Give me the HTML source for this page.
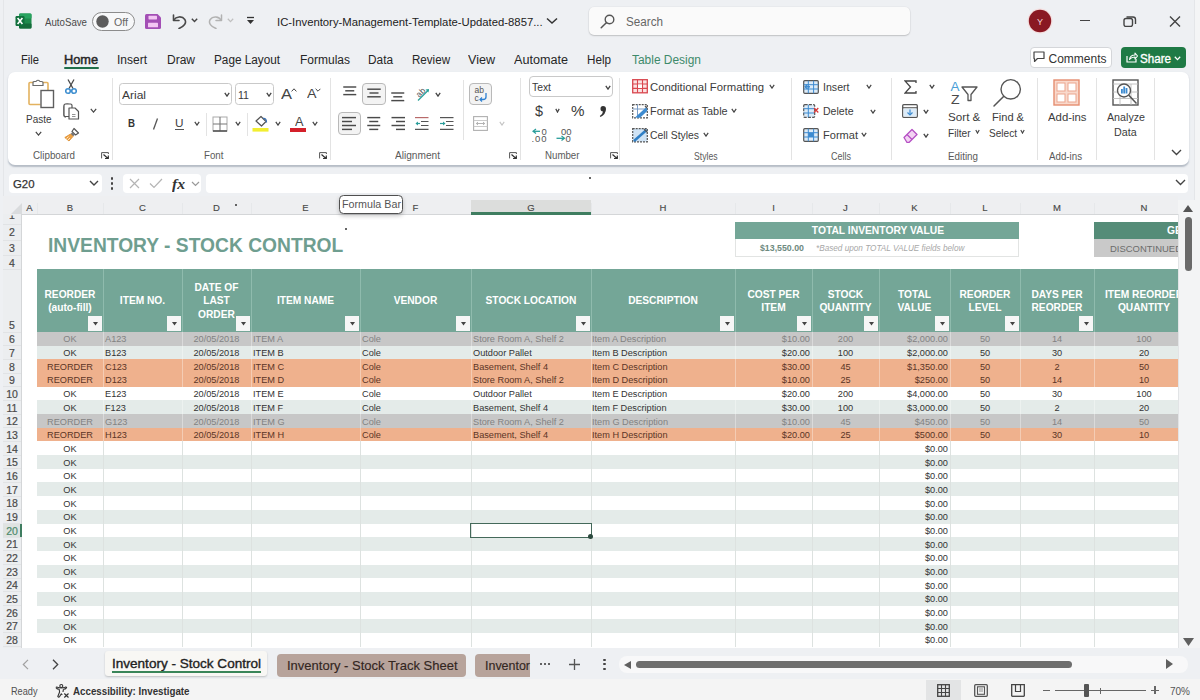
<!DOCTYPE html>
<html><head><meta charset="utf-8"><style>
html,body{margin:0;padding:0;}
body{width:1200px;height:700px;overflow:hidden;position:relative;background:#eef0f3;font-family:"Liberation Sans",sans-serif;}
body>div,body>svg{position:absolute;box-sizing:border-box;}
</style></head><body>
<div style="left:8px;top:72px;width:1181px;height:93px;background:#ffffff;border-radius:7px;box-shadow:0 1.2px 1.5px rgba(90,105,125,0.38);"></div>
<div style="left:9px;top:174px;width:93px;height:19px;background:#ffffff;border-radius:4px;"></div>
<div style="left:123px;top:174px;width:78px;height:19px;background:#ffffff;border-radius:4px;"></div>
<div style="left:206px;top:174px;width:982px;height:19px;background:#ffffff;border-radius:4px;"></div>
<div style="left:22px;top:214px;width:1156px;height:434px;background:#ffffff;"></div>
<div style="left:3px;top:0px;width:1px;height:700px;background:#e4e6e9;"></div>
<div style="left:1194px;top:0px;width:1px;height:700px;background:#e4e6e9;"></div>
<div style="left:1195px;top:0px;width:5px;height:700px;background:#f4f5f6;"></div>
<div style="left:45.00px;top:11.30px;height:22px;line-height:22px;font-size:11px;color:#4a4a4a;white-space:nowrap;transform:scaleX(0.8805);transform-origin:left center;">AutoSave</div>
<div style="left:277.00px;top:11.00px;height:22.6px;line-height:22.6px;font-size:11.3px;color:#222;white-space:nowrap;">IC-Inventory-Management-Template-Updated-8857...</div>
<div style="left:589px;top:7px;width:320.5px;height:28.4px;background:#fafafa;border-radius:5px;box-shadow:0 1px 1.5px rgba(0,0,0,0.18),0 0 0 0.6px #e4e6e9;"></div>
<div style="left:626.00px;top:9.80px;height:24px;line-height:24px;font-size:12px;color:#666;white-space:nowrap;transform:scaleX(0.9731);transform-origin:left center;">Search</div>
<div style="left:21.00px;top:47.80px;height:24px;line-height:24px;font-size:12px;color:#262626;white-space:nowrap;transform:scaleX(0.9309);transform-origin:left center;">File</div>
<div style="left:64.00px;top:47.80px;height:24px;line-height:24px;font-size:12px;color:#262626;white-space:nowrap;transform:scaleX(1.0621);transform-origin:left center;-webkit-text-stroke:0.45px #262626;">Home</div>
<div style="left:117.00px;top:47.80px;height:24px;line-height:24px;font-size:12px;color:#262626;white-space:nowrap;">Insert</div>
<div style="left:167.00px;top:47.80px;height:24px;line-height:24px;font-size:12px;color:#262626;white-space:nowrap;">Draw</div>
<div style="left:214.00px;top:47.80px;height:24px;line-height:24px;font-size:12px;color:#262626;white-space:nowrap;transform:scaleX(0.9794);transform-origin:left center;">Page Layout</div>
<div style="left:300.00px;top:47.80px;height:24px;line-height:24px;font-size:12px;color:#262626;white-space:nowrap;">Formulas</div>
<div style="left:368.00px;top:47.80px;height:24px;line-height:24px;font-size:12px;color:#262626;white-space:nowrap;transform:scaleX(0.9863);transform-origin:left center;">Data</div>
<div style="left:412.00px;top:47.80px;height:24px;line-height:24px;font-size:12px;color:#262626;white-space:nowrap;transform:scaleX(0.9658);transform-origin:left center;">Review</div>
<div style="left:468.00px;top:47.80px;height:24px;line-height:24px;font-size:12px;color:#262626;white-space:nowrap;transform:scaleX(1.0467);transform-origin:left center;">View</div>
<div style="left:514.00px;top:47.80px;height:24px;line-height:24px;font-size:12px;color:#262626;white-space:nowrap;transform:scaleX(1.0513);transform-origin:left center;">Automate</div>
<div style="left:587.00px;top:47.80px;height:24px;line-height:24px;font-size:12px;color:#262626;white-space:nowrap;transform:scaleX(0.9724);transform-origin:left center;">Help</div>
<div style="left:632.00px;top:47.80px;height:24px;line-height:24px;font-size:12px;color:#3d8a6a;white-space:nowrap;transform:scaleX(0.9946);transform-origin:left center;">Table Design</div>
<div style="left:64px;top:66.5px;width:34.5px;height:2.200000000000003px;background:#1f6e4a;border-radius:1px;"></div>
<div style="left:3px;top:196px;width:1175px;height:18px;background:#eeeff1;"></div>
<div style="left:3px;top:214px;width:1175px;height:1px;background:#d4d6d8;"></div>
<div style="left:37px;top:203px;width:1px;height:11px;background:#e6e8ea;"></div>
<div style="left:103px;top:203px;width:1px;height:11px;background:#e6e8ea;"></div>
<div style="left:182px;top:203px;width:1px;height:11px;background:#e6e8ea;"></div>
<div style="left:251px;top:203px;width:1px;height:11px;background:#e6e8ea;"></div>
<div style="left:360px;top:203px;width:1px;height:11px;background:#e6e8ea;"></div>
<div style="left:471px;top:203px;width:1px;height:11px;background:#e6e8ea;"></div>
<div style="left:591px;top:203px;width:1px;height:11px;background:#e6e8ea;"></div>
<div style="left:735px;top:203px;width:1px;height:11px;background:#e6e8ea;"></div>
<div style="left:812px;top:203px;width:1px;height:11px;background:#e6e8ea;"></div>
<div style="left:879px;top:203px;width:1px;height:11px;background:#e6e8ea;"></div>
<div style="left:950px;top:203px;width:1px;height:11px;background:#e6e8ea;"></div>
<div style="left:1020px;top:203px;width:1px;height:11px;background:#e6e8ea;"></div>
<div style="left:1094px;top:203px;width:1px;height:11px;background:#e6e8ea;"></div>
<div style="left:471px;top:200px;width:120px;height:13px;background:#dcdddc;"></div>
<div style="left:471px;top:212px;width:120px;height:2.5px;background:#3f7d60;"></div>
<div style="left:26.33px;top:197.50px;height:19.0px;line-height:19.0px;font-size:9.5px;color:#484848;white-space:nowrap;-webkit-text-stroke:0.15px #484848;">A</div>
<div style="left:66.83px;top:197.50px;height:19.0px;line-height:19.0px;font-size:9.5px;color:#484848;white-space:nowrap;-webkit-text-stroke:0.15px #484848;">B</div>
<div style="left:139.07px;top:197.50px;height:19.0px;line-height:19.0px;font-size:9.5px;color:#484848;white-space:nowrap;-webkit-text-stroke:0.15px #484848;">C</div>
<div style="left:213.07px;top:197.50px;height:19.0px;line-height:19.0px;font-size:9.5px;color:#484848;white-space:nowrap;-webkit-text-stroke:0.15px #484848;">D</div>
<div style="left:302.33px;top:197.50px;height:19.0px;line-height:19.0px;font-size:9.5px;color:#484848;white-space:nowrap;-webkit-text-stroke:0.15px #484848;">E</div>
<div style="left:412.60px;top:197.50px;height:19.0px;line-height:19.0px;font-size:9.5px;color:#484848;white-space:nowrap;-webkit-text-stroke:0.15px #484848;">F</div>
<div style="left:527.31px;top:197.50px;height:19.0px;line-height:19.0px;font-size:9.5px;color:#484848;white-space:nowrap;-webkit-text-stroke:0.15px #484848;">G</div>
<div style="left:659.57px;top:197.50px;height:19.0px;line-height:19.0px;font-size:9.5px;color:#484848;white-space:nowrap;-webkit-text-stroke:0.15px #484848;">H</div>
<div style="left:772.18px;top:197.50px;height:19.0px;line-height:19.0px;font-size:9.5px;color:#484848;white-space:nowrap;-webkit-text-stroke:0.15px #484848;">I</div>
<div style="left:843.12px;top:197.50px;height:19.0px;line-height:19.0px;font-size:9.5px;color:#484848;white-space:nowrap;-webkit-text-stroke:0.15px #484848;">J</div>
<div style="left:911.33px;top:197.50px;height:19.0px;line-height:19.0px;font-size:9.5px;color:#484848;white-space:nowrap;-webkit-text-stroke:0.15px #484848;">K</div>
<div style="left:982.36px;top:197.50px;height:19.0px;line-height:19.0px;font-size:9.5px;color:#484848;white-space:nowrap;-webkit-text-stroke:0.15px #484848;">L</div>
<div style="left:1053.04px;top:197.50px;height:19.0px;line-height:19.0px;font-size:9.5px;color:#484848;white-space:nowrap;-webkit-text-stroke:0.15px #484848;">M</div>
<div style="left:1140.57px;top:197.50px;height:19.0px;line-height:19.0px;font-size:9.5px;color:#484848;white-space:nowrap;-webkit-text-stroke:0.15px #484848;">N</div>
<svg style="left:10px;top:203px;" width="12" height="11" viewBox="0 0 12 11"><path d="M12 0 L12 11 L1 11 Z" fill="#d9dbdd"/></svg>
<div style="left:3px;top:214px;width:19px;height:434px;background:#eceef0;"></div>
<div style="left:21px;top:214px;width:1px;height:434px;background:#d4d6d8;"></div>
<div style="left:3px;top:223.5px;width:18px;height:1.0px;background:#e1e3e5;"></div>
<div style="left:3px;top:239.5px;width:18px;height:1.0px;background:#e1e3e5;"></div>
<div style="left:3px;top:254.5px;width:18px;height:1.0px;background:#e1e3e5;"></div>
<div style="left:3px;top:268.5px;width:18px;height:1.0px;background:#e1e3e5;"></div>
<div style="left:3px;top:331.5px;width:18px;height:1.0px;background:#e1e3e5;"></div>
<div style="left:3px;top:345.18px;width:18px;height:1.0px;background:#e1e3e5;"></div>
<div style="left:3px;top:358.86px;width:18px;height:1.0px;background:#e1e3e5;"></div>
<div style="left:3px;top:372.54px;width:18px;height:1.0px;background:#e1e3e5;"></div>
<div style="left:3px;top:386.22px;width:18px;height:1.0px;background:#e1e3e5;"></div>
<div style="left:3px;top:399.90000000000003px;width:18px;height:1.0px;background:#e1e3e5;"></div>
<div style="left:3px;top:413.58px;width:18px;height:1.0px;background:#e1e3e5;"></div>
<div style="left:3px;top:427.26px;width:18px;height:1.0px;background:#e1e3e5;"></div>
<div style="left:3px;top:440.94px;width:18px;height:1.0px;background:#e1e3e5;"></div>
<div style="left:3px;top:454.62px;width:18px;height:1.0px;background:#e1e3e5;"></div>
<div style="left:3px;top:468.3px;width:18px;height:1.0px;background:#e1e3e5;"></div>
<div style="left:3px;top:481.98px;width:18px;height:1.0px;background:#e1e3e5;"></div>
<div style="left:3px;top:495.66px;width:18px;height:1.0px;background:#e1e3e5;"></div>
<div style="left:3px;top:509.34px;width:18px;height:1.0px;background:#e1e3e5;"></div>
<div style="left:3px;top:523.02px;width:18px;height:1.0px;background:#e1e3e5;"></div>
<div style="left:3px;top:536.6999999999999px;width:18px;height:1.0px;background:#e1e3e5;"></div>
<div style="left:3px;top:550.38px;width:18px;height:1.0px;background:#e1e3e5;"></div>
<div style="left:3px;top:564.06px;width:18px;height:1.0px;background:#e1e3e5;"></div>
<div style="left:3px;top:577.7399999999999px;width:18px;height:1.0px;background:#e1e3e5;"></div>
<div style="left:3px;top:591.42px;width:18px;height:1.0px;background:#e1e3e5;"></div>
<div style="left:3px;top:605.1px;width:18px;height:1.0px;background:#e1e3e5;"></div>
<div style="left:3px;top:618.78px;width:18px;height:1.0px;background:#e1e3e5;"></div>
<div style="left:3px;top:632.4599999999999px;width:18px;height:1.0px;background:#e1e3e5;"></div>
<div style="left:3px;top:646.14px;width:18px;height:1.0px;background:#e1e3e5;"></div>
<div style="left:3px;top:523.52px;width:19px;height:13.67999999999995px;background:#dfe3e1;"></div>
<div style="left:20px;top:523.52px;width:2px;height:13.67999999999995px;background:#3f7d60;"></div>
<div style="left:9.08px;top:205.20px;height:21.0px;line-height:21.0px;font-size:10.5px;color:#4a4a4a;white-space:nowrap;clip-path:inset(10.20px 0 0 0);-webkit-text-stroke:0.2px #4a4a4a;">1</div>
<div style="left:9.08px;top:222.00px;height:21.0px;line-height:21.0px;font-size:10.5px;color:#4a4a4a;white-space:nowrap;-webkit-text-stroke:0.2px #4a4a4a;">2</div>
<div style="left:9.08px;top:238.30px;height:21.0px;line-height:21.0px;font-size:10.5px;color:#4a4a4a;white-space:nowrap;-webkit-text-stroke:0.2px #4a4a4a;">3</div>
<div style="left:9.08px;top:252.80px;height:21.0px;line-height:21.0px;font-size:10.5px;color:#4a4a4a;white-space:nowrap;-webkit-text-stroke:0.2px #4a4a4a;">4</div>
<div style="left:9.08px;top:315.30px;height:21.0px;line-height:21.0px;font-size:10.5px;color:#4a4a4a;white-space:nowrap;-webkit-text-stroke:0.2px #4a4a4a;">5</div>
<div style="left:9.08px;top:329.14px;height:21.0px;line-height:21.0px;font-size:10.5px;color:#4a4a4a;white-space:nowrap;-webkit-text-stroke:0.2px #4a4a4a;">6</div>
<div style="left:9.08px;top:342.82px;height:21.0px;line-height:21.0px;font-size:10.5px;color:#4a4a4a;white-space:nowrap;-webkit-text-stroke:0.2px #4a4a4a;">7</div>
<div style="left:9.08px;top:356.50px;height:21.0px;line-height:21.0px;font-size:10.5px;color:#4a4a4a;white-space:nowrap;-webkit-text-stroke:0.2px #4a4a4a;">8</div>
<div style="left:9.08px;top:370.18px;height:21.0px;line-height:21.0px;font-size:10.5px;color:#4a4a4a;white-space:nowrap;-webkit-text-stroke:0.2px #4a4a4a;">9</div>
<div style="left:6.16px;top:383.86px;height:21.0px;line-height:21.0px;font-size:10.5px;color:#4a4a4a;white-space:nowrap;-webkit-text-stroke:0.2px #4a4a4a;">10</div>
<div style="left:6.55px;top:397.54px;height:21.0px;line-height:21.0px;font-size:10.5px;color:#4a4a4a;white-space:nowrap;-webkit-text-stroke:0.2px #4a4a4a;">11</div>
<div style="left:6.16px;top:411.22px;height:21.0px;line-height:21.0px;font-size:10.5px;color:#4a4a4a;white-space:nowrap;-webkit-text-stroke:0.2px #4a4a4a;">12</div>
<div style="left:6.16px;top:424.90px;height:21.0px;line-height:21.0px;font-size:10.5px;color:#4a4a4a;white-space:nowrap;-webkit-text-stroke:0.2px #4a4a4a;">13</div>
<div style="left:6.16px;top:438.58px;height:21.0px;line-height:21.0px;font-size:10.5px;color:#4a4a4a;white-space:nowrap;-webkit-text-stroke:0.2px #4a4a4a;">14</div>
<div style="left:6.16px;top:452.26px;height:21.0px;line-height:21.0px;font-size:10.5px;color:#4a4a4a;white-space:nowrap;-webkit-text-stroke:0.2px #4a4a4a;">15</div>
<div style="left:6.16px;top:465.94px;height:21.0px;line-height:21.0px;font-size:10.5px;color:#4a4a4a;white-space:nowrap;-webkit-text-stroke:0.2px #4a4a4a;">16</div>
<div style="left:6.16px;top:479.62px;height:21.0px;line-height:21.0px;font-size:10.5px;color:#4a4a4a;white-space:nowrap;-webkit-text-stroke:0.2px #4a4a4a;">17</div>
<div style="left:6.16px;top:493.30px;height:21.0px;line-height:21.0px;font-size:10.5px;color:#4a4a4a;white-space:nowrap;-webkit-text-stroke:0.2px #4a4a4a;">18</div>
<div style="left:6.16px;top:506.98px;height:21.0px;line-height:21.0px;font-size:10.5px;color:#4a4a4a;white-space:nowrap;-webkit-text-stroke:0.2px #4a4a4a;">19</div>
<div style="left:6.16px;top:520.66px;height:21.0px;line-height:21.0px;font-size:10.5px;color:#4d8a6c;white-space:nowrap;-webkit-text-stroke:0.2px #4d8a6c;">20</div>
<div style="left:6.16px;top:534.34px;height:21.0px;line-height:21.0px;font-size:10.5px;color:#4a4a4a;white-space:nowrap;-webkit-text-stroke:0.2px #4a4a4a;">21</div>
<div style="left:6.16px;top:548.02px;height:21.0px;line-height:21.0px;font-size:10.5px;color:#4a4a4a;white-space:nowrap;-webkit-text-stroke:0.2px #4a4a4a;">22</div>
<div style="left:6.16px;top:561.70px;height:21.0px;line-height:21.0px;font-size:10.5px;color:#4a4a4a;white-space:nowrap;-webkit-text-stroke:0.2px #4a4a4a;">23</div>
<div style="left:6.16px;top:575.38px;height:21.0px;line-height:21.0px;font-size:10.5px;color:#4a4a4a;white-space:nowrap;-webkit-text-stroke:0.2px #4a4a4a;">24</div>
<div style="left:6.16px;top:589.06px;height:21.0px;line-height:21.0px;font-size:10.5px;color:#4a4a4a;white-space:nowrap;-webkit-text-stroke:0.2px #4a4a4a;">25</div>
<div style="left:6.16px;top:602.74px;height:21.0px;line-height:21.0px;font-size:10.5px;color:#4a4a4a;white-space:nowrap;-webkit-text-stroke:0.2px #4a4a4a;">26</div>
<div style="left:6.16px;top:616.42px;height:21.0px;line-height:21.0px;font-size:10.5px;color:#4a4a4a;white-space:nowrap;-webkit-text-stroke:0.2px #4a4a4a;">27</div>
<div style="left:6.16px;top:630.10px;height:21.0px;line-height:21.0px;font-size:10.5px;color:#4a4a4a;white-space:nowrap;-webkit-text-stroke:0.2px #4a4a4a;">28</div>
<div style="left:48.00px;top:225.60px;height:39.6px;line-height:39.6px;font-size:19.8px;color:#6f9e90;white-space:nowrap;font-weight:bold;transform:scaleX(0.9721);transform-origin:left center;">INVENTORY - STOCK CONTROL</div>
<div style="left:735px;top:221.5px;width:284px;height:17.5px;background:#74a697;"></div>
<div style="left:811.80px;top:220.80px;height:20.6px;line-height:20.6px;font-size:10.3px;color:#ffffff;white-space:nowrap;font-weight:bold;">TOTAL INVENTORY VALUE</div>
<div style="left:735px;top:239px;width:284px;height:17.5px;background:#ffffff;border:1px solid #e2e4e3;border-top:none;"></div>
<div style="left:759.96px;top:239.80px;height:17.6px;line-height:17.6px;font-size:8.8px;color:#6e8a80;white-space:nowrap;font-weight:bold;">$13,550.00</div>
<div style="left:816.00px;top:240.60px;height:16.4px;line-height:16.4px;font-size:8.2px;color:#a8a8a8;white-space:nowrap;font-style:italic;">*Based upon TOTAL VALUE fields below</div>
<div style="left:1094px;top:221.5px;width:84px;height:17.5px;background:#558c78;"></div>
<div style="left:1167.00px;top:220.80px;height:20.6px;line-height:20.6px;font-size:10.3px;color:#ffffff;white-space:nowrap;font-weight:bold;">GENERAL</div>
<div style="left:1094px;top:239px;width:84px;height:17.5px;background:#c9c9c9;"></div>
<div style="left:1110.00px;top:239.20px;height:19.2px;line-height:19.2px;font-size:9.6px;color:#6c6c6c;white-space:nowrap;transform:scaleX(0.9854);transform-origin:left center;">DISCONTINUED</div>
<div style="left:37px;top:269px;width:1141px;height:63px;background:#74a697;"></div>
<div style="left:102.5px;top:269px;width:1.0px;height:63px;background:#8fbbad;"></div>
<div style="left:181.5px;top:269px;width:1.0px;height:63px;background:#8fbbad;"></div>
<div style="left:250.5px;top:269px;width:1.0px;height:63px;background:#8fbbad;"></div>
<div style="left:359.5px;top:269px;width:1.0px;height:63px;background:#8fbbad;"></div>
<div style="left:470.5px;top:269px;width:1.0px;height:63px;background:#8fbbad;"></div>
<div style="left:590.5px;top:269px;width:1.0px;height:63px;background:#8fbbad;"></div>
<div style="left:734.5px;top:269px;width:1.0px;height:63px;background:#8fbbad;"></div>
<div style="left:811.5px;top:269px;width:1.0px;height:63px;background:#8fbbad;"></div>
<div style="left:878.5px;top:269px;width:1.0px;height:63px;background:#8fbbad;"></div>
<div style="left:949.5px;top:269px;width:1.0px;height:63px;background:#8fbbad;"></div>
<div style="left:1019.5px;top:269px;width:1.0px;height:63px;background:#8fbbad;"></div>
<div style="left:1093.5px;top:269px;width:1.0px;height:63px;background:#8fbbad;"></div>
<div style="left:1193.5px;top:269px;width:1.0px;height:63px;background:#8fbbad;"></div>
<div style="left:44.50px;top:284.50px;height:20.4px;line-height:20.4px;font-size:10.2px;color:#ffffff;white-space:nowrap;font-weight:bold;">REORDER</div>
<div style="left:48.19px;top:297.90px;height:20.4px;line-height:20.4px;font-size:10.2px;color:#ffffff;white-space:nowrap;font-weight:bold;">(auto-fill)</div>
<div style="left:87.5px;top:316px;width:14.5px;height:15px;background:#f6f6f6;"></div>
<svg style="left:92.5px;top:322px;" width="5" height="3.5" viewBox="0 0 5 3.5"><path d="M0 0 L5 0 L2.5 3.5 Z" fill="#444"/></svg>
<div style="left:119.83px;top:291.20px;height:20.4px;line-height:20.4px;font-size:10.2px;color:#ffffff;white-space:nowrap;font-weight:bold;">ITEM NO.</div>
<div style="left:166.5px;top:316px;width:14.5px;height:15px;background:#f6f6f6;"></div>
<svg style="left:171.5px;top:322px;" width="5" height="3.5" viewBox="0 0 5 3.5"><path d="M0 0 L5 0 L2.5 3.5 Z" fill="#444"/></svg>
<div style="left:194.50px;top:277.80px;height:20.4px;line-height:20.4px;font-size:10.2px;color:#ffffff;white-space:nowrap;font-weight:bold;">DATE OF</div>
<div style="left:203.18px;top:291.20px;height:20.4px;line-height:20.4px;font-size:10.2px;color:#ffffff;white-space:nowrap;font-weight:bold;">LAST</div>
<div style="left:198.08px;top:304.60px;height:20.4px;line-height:20.4px;font-size:10.2px;color:#ffffff;white-space:nowrap;font-weight:bold;">ORDER</div>
<div style="left:235.5px;top:316px;width:14.5px;height:15px;background:#f6f6f6;"></div>
<svg style="left:240.5px;top:322px;" width="5" height="3.5" viewBox="0 0 5 3.5"><path d="M0 0 L5 0 L2.5 3.5 Z" fill="#444"/></svg>
<div style="left:276.88px;top:291.20px;height:20.4px;line-height:20.4px;font-size:10.2px;color:#ffffff;white-space:nowrap;font-weight:bold;">ITEM NAME</div>
<div style="left:344.5px;top:316px;width:14.5px;height:15px;background:#f6f6f6;"></div>
<svg style="left:349.5px;top:322px;" width="5" height="3.5" viewBox="0 0 5 3.5"><path d="M0 0 L5 0 L2.5 3.5 Z" fill="#444"/></svg>
<div style="left:393.68px;top:291.20px;height:20.4px;line-height:20.4px;font-size:10.2px;color:#ffffff;white-space:nowrap;font-weight:bold;">VENDOR</div>
<div style="left:455.5px;top:316px;width:14.5px;height:15px;background:#f6f6f6;"></div>
<svg style="left:460.5px;top:322px;" width="5" height="3.5" viewBox="0 0 5 3.5"><path d="M0 0 L5 0 L2.5 3.5 Z" fill="#444"/></svg>
<div style="left:485.57px;top:291.20px;height:20.4px;line-height:20.4px;font-size:10.2px;color:#ffffff;white-space:nowrap;font-weight:bold;">STOCK LOCATION</div>
<div style="left:575.5px;top:316px;width:14.5px;height:15px;background:#f6f6f6;"></div>
<svg style="left:580.5px;top:322px;" width="5" height="3.5" viewBox="0 0 5 3.5"><path d="M0 0 L5 0 L2.5 3.5 Z" fill="#444"/></svg>
<div style="left:628.15px;top:291.20px;height:20.4px;line-height:20.4px;font-size:10.2px;color:#ffffff;white-space:nowrap;font-weight:bold;">DESCRIPTION</div>
<div style="left:719.5px;top:316px;width:14.5px;height:15px;background:#f6f6f6;"></div>
<svg style="left:724.5px;top:322px;" width="5" height="3.5" viewBox="0 0 5 3.5"><path d="M0 0 L5 0 L2.5 3.5 Z" fill="#444"/></svg>
<div style="left:747.43px;top:284.50px;height:20.4px;line-height:20.4px;font-size:10.2px;color:#ffffff;white-space:nowrap;font-weight:bold;">COST PER</div>
<div style="left:761.32px;top:297.90px;height:20.4px;line-height:20.4px;font-size:10.2px;color:#ffffff;white-space:nowrap;font-weight:bold;">ITEM</div>
<div style="left:796.5px;top:316px;width:14.5px;height:15px;background:#f6f6f6;"></div>
<svg style="left:801.5px;top:322px;" width="5" height="3.5" viewBox="0 0 5 3.5"><path d="M0 0 L5 0 L2.5 3.5 Z" fill="#444"/></svg>
<div style="left:827.74px;top:284.50px;height:20.4px;line-height:20.4px;font-size:10.2px;color:#ffffff;white-space:nowrap;font-weight:bold;">STOCK</div>
<div style="left:819.43px;top:297.90px;height:20.4px;line-height:20.4px;font-size:10.2px;color:#ffffff;white-space:nowrap;font-weight:bold;">QUANTITY</div>
<div style="left:863.5px;top:316px;width:14.5px;height:15px;background:#f6f6f6;"></div>
<svg style="left:868.5px;top:322px;" width="5" height="3.5" viewBox="0 0 5 3.5"><path d="M0 0 L5 0 L2.5 3.5 Z" fill="#444"/></svg>
<div style="left:897.97px;top:284.50px;height:20.4px;line-height:20.4px;font-size:10.2px;color:#ffffff;white-space:nowrap;font-weight:bold;">TOTAL</div>
<div style="left:897.59px;top:297.90px;height:20.4px;line-height:20.4px;font-size:10.2px;color:#ffffff;white-space:nowrap;font-weight:bold;">VALUE</div>
<div style="left:934.5px;top:316px;width:14.5px;height:15px;background:#f6f6f6;"></div>
<svg style="left:939.5px;top:322px;" width="5" height="3.5" viewBox="0 0 5 3.5"><path d="M0 0 L5 0 L2.5 3.5 Z" fill="#444"/></svg>
<div style="left:959.50px;top:284.50px;height:20.4px;line-height:20.4px;font-size:10.2px;color:#ffffff;white-space:nowrap;font-weight:bold;">REORDER</div>
<div style="left:968.56px;top:297.90px;height:20.4px;line-height:20.4px;font-size:10.2px;color:#ffffff;white-space:nowrap;font-weight:bold;">LEVEL</div>
<div style="left:1004.5px;top:316px;width:14.5px;height:15px;background:#f6f6f6;"></div>
<svg style="left:1009.5px;top:322px;" width="5" height="3.5" viewBox="0 0 5 3.5"><path d="M0 0 L5 0 L2.5 3.5 Z" fill="#444"/></svg>
<div style="left:1031.39px;top:284.50px;height:20.4px;line-height:20.4px;font-size:10.2px;color:#ffffff;white-space:nowrap;font-weight:bold;">DAYS PER</div>
<div style="left:1031.50px;top:297.90px;height:20.4px;line-height:20.4px;font-size:10.2px;color:#ffffff;white-space:nowrap;font-weight:bold;">REORDER</div>
<div style="left:1078.5px;top:316px;width:14.5px;height:15px;background:#f6f6f6;"></div>
<svg style="left:1083.5px;top:322px;" width="5" height="3.5" viewBox="0 0 5 3.5"><path d="M0 0 L5 0 L2.5 3.5 Z" fill="#444"/></svg>
<div style="left:1104.90px;top:284.50px;height:20.4px;line-height:20.4px;font-size:10.2px;color:#ffffff;white-space:nowrap;font-weight:bold;">ITEM REORDER</div>
<div style="left:1117.93px;top:297.90px;height:20.4px;line-height:20.4px;font-size:10.2px;color:#ffffff;white-space:nowrap;font-weight:bold;">QUANTITY</div>
<div style="left:37px;top:332.0px;width:1141px;height:13.680000000000007px;background:#c7c7c7;"></div>
<div style="left:102.5px;top:332.0px;width:1.0px;height:13.680000000000007px;background:rgba(255,255,255,0.35);"></div>
<div style="left:181.5px;top:332.0px;width:1.0px;height:13.680000000000007px;background:rgba(255,255,255,0.35);"></div>
<div style="left:250.5px;top:332.0px;width:1.0px;height:13.680000000000007px;background:rgba(255,255,255,0.35);"></div>
<div style="left:359.5px;top:332.0px;width:1.0px;height:13.680000000000007px;background:rgba(255,255,255,0.35);"></div>
<div style="left:470.5px;top:332.0px;width:1.0px;height:13.680000000000007px;background:rgba(255,255,255,0.35);"></div>
<div style="left:590.5px;top:332.0px;width:1.0px;height:13.680000000000007px;background:rgba(255,255,255,0.35);"></div>
<div style="left:734.5px;top:332.0px;width:1.0px;height:13.680000000000007px;background:rgba(255,255,255,0.35);"></div>
<div style="left:811.5px;top:332.0px;width:1.0px;height:13.680000000000007px;background:rgba(255,255,255,0.35);"></div>
<div style="left:878.5px;top:332.0px;width:1.0px;height:13.680000000000007px;background:rgba(255,255,255,0.35);"></div>
<div style="left:949.5px;top:332.0px;width:1.0px;height:13.680000000000007px;background:rgba(255,255,255,0.35);"></div>
<div style="left:1019.5px;top:332.0px;width:1.0px;height:13.680000000000007px;background:rgba(255,255,255,0.35);"></div>
<div style="left:1093.5px;top:332.0px;width:1.0px;height:13.680000000000007px;background:rgba(255,255,255,0.35);"></div>
<div style="left:63.35px;top:330.44px;height:18.4px;line-height:18.4px;font-size:9.2px;color:#828282;white-space:nowrap;">OK</div>
<div style="left:105.00px;top:330.44px;height:18.4px;line-height:18.4px;font-size:9.2px;color:#828282;white-space:nowrap;">A123</div>
<div style="left:193.48px;top:330.44px;height:18.4px;line-height:18.4px;font-size:9.2px;color:#828282;white-space:nowrap;">20/05/2018</div>
<div style="left:253.00px;top:330.44px;height:18.4px;line-height:18.4px;font-size:9.2px;color:#828282;white-space:nowrap;">ITEM A</div>
<div style="left:362.00px;top:330.44px;height:18.4px;line-height:18.4px;font-size:9.2px;color:#828282;white-space:nowrap;">Cole</div>
<div style="left:473.00px;top:330.44px;height:18.4px;line-height:18.4px;font-size:9.2px;color:#828282;white-space:nowrap;">Store Room A, Shelf 2</div>
<div style="left:592.00px;top:330.44px;height:18.4px;line-height:18.4px;font-size:9.2px;color:#828282;white-space:nowrap;">Item A Description</div>
<div style="left:781.86px;top:330.44px;height:18.4px;line-height:18.4px;font-size:9.2px;color:#828282;white-space:nowrap;">$10.00</div>
<div style="left:837.82px;top:330.44px;height:18.4px;line-height:18.4px;font-size:9.2px;color:#828282;white-space:nowrap;">200</div>
<div style="left:907.07px;top:330.44px;height:18.4px;line-height:18.4px;font-size:9.2px;color:#828282;white-space:nowrap;">$2,000.00</div>
<div style="left:979.88px;top:330.44px;height:18.4px;line-height:18.4px;font-size:9.2px;color:#828282;white-space:nowrap;">50</div>
<div style="left:1051.88px;top:330.44px;height:18.4px;line-height:18.4px;font-size:9.2px;color:#828282;white-space:nowrap;">14</div>
<div style="left:1136.32px;top:330.44px;height:18.4px;line-height:18.4px;font-size:9.2px;color:#828282;white-space:nowrap;">100</div>
<div style="left:37px;top:345.68px;width:1141px;height:13.680000000000007px;background:#e4ebe9;"></div>
<div style="left:102.5px;top:345.68px;width:1.0px;height:13.680000000000007px;background:rgba(255,255,255,0.35);"></div>
<div style="left:181.5px;top:345.68px;width:1.0px;height:13.680000000000007px;background:rgba(255,255,255,0.35);"></div>
<div style="left:250.5px;top:345.68px;width:1.0px;height:13.680000000000007px;background:rgba(255,255,255,0.35);"></div>
<div style="left:359.5px;top:345.68px;width:1.0px;height:13.680000000000007px;background:rgba(255,255,255,0.35);"></div>
<div style="left:470.5px;top:345.68px;width:1.0px;height:13.680000000000007px;background:rgba(255,255,255,0.35);"></div>
<div style="left:590.5px;top:345.68px;width:1.0px;height:13.680000000000007px;background:rgba(255,255,255,0.35);"></div>
<div style="left:734.5px;top:345.68px;width:1.0px;height:13.680000000000007px;background:rgba(255,255,255,0.35);"></div>
<div style="left:811.5px;top:345.68px;width:1.0px;height:13.680000000000007px;background:rgba(255,255,255,0.35);"></div>
<div style="left:878.5px;top:345.68px;width:1.0px;height:13.680000000000007px;background:rgba(255,255,255,0.35);"></div>
<div style="left:949.5px;top:345.68px;width:1.0px;height:13.680000000000007px;background:rgba(255,255,255,0.35);"></div>
<div style="left:1019.5px;top:345.68px;width:1.0px;height:13.680000000000007px;background:rgba(255,255,255,0.35);"></div>
<div style="left:1093.5px;top:345.68px;width:1.0px;height:13.680000000000007px;background:rgba(255,255,255,0.35);"></div>
<div style="left:63.35px;top:344.12px;height:18.4px;line-height:18.4px;font-size:9.2px;color:#333333;white-space:nowrap;">OK</div>
<div style="left:105.00px;top:344.12px;height:18.4px;line-height:18.4px;font-size:9.2px;color:#333333;white-space:nowrap;">B123</div>
<div style="left:193.48px;top:344.12px;height:18.4px;line-height:18.4px;font-size:9.2px;color:#333333;white-space:nowrap;">20/05/2018</div>
<div style="left:253.00px;top:344.12px;height:18.4px;line-height:18.4px;font-size:9.2px;color:#333333;white-space:nowrap;">ITEM B</div>
<div style="left:362.00px;top:344.12px;height:18.4px;line-height:18.4px;font-size:9.2px;color:#333333;white-space:nowrap;">Cole</div>
<div style="left:473.00px;top:344.12px;height:18.4px;line-height:18.4px;font-size:9.2px;color:#333333;white-space:nowrap;">Outdoor Pallet</div>
<div style="left:592.00px;top:344.12px;height:18.4px;line-height:18.4px;font-size:9.2px;color:#333333;white-space:nowrap;">Item B Description</div>
<div style="left:781.86px;top:344.12px;height:18.4px;line-height:18.4px;font-size:9.2px;color:#333333;white-space:nowrap;">$20.00</div>
<div style="left:837.82px;top:344.12px;height:18.4px;line-height:18.4px;font-size:9.2px;color:#333333;white-space:nowrap;">100</div>
<div style="left:907.07px;top:344.12px;height:18.4px;line-height:18.4px;font-size:9.2px;color:#333333;white-space:nowrap;">$2,000.00</div>
<div style="left:979.88px;top:344.12px;height:18.4px;line-height:18.4px;font-size:9.2px;color:#333333;white-space:nowrap;">50</div>
<div style="left:1051.88px;top:344.12px;height:18.4px;line-height:18.4px;font-size:9.2px;color:#333333;white-space:nowrap;">30</div>
<div style="left:1138.88px;top:344.12px;height:18.4px;line-height:18.4px;font-size:9.2px;color:#333333;white-space:nowrap;">20</div>
<div style="left:37px;top:359.36px;width:1141px;height:13.680000000000007px;background:#efb18d;"></div>
<div style="left:102.5px;top:359.36px;width:1.0px;height:13.680000000000007px;background:rgba(255,255,255,0.35);"></div>
<div style="left:181.5px;top:359.36px;width:1.0px;height:13.680000000000007px;background:rgba(255,255,255,0.35);"></div>
<div style="left:250.5px;top:359.36px;width:1.0px;height:13.680000000000007px;background:rgba(255,255,255,0.35);"></div>
<div style="left:359.5px;top:359.36px;width:1.0px;height:13.680000000000007px;background:rgba(255,255,255,0.35);"></div>
<div style="left:470.5px;top:359.36px;width:1.0px;height:13.680000000000007px;background:rgba(255,255,255,0.35);"></div>
<div style="left:590.5px;top:359.36px;width:1.0px;height:13.680000000000007px;background:rgba(255,255,255,0.35);"></div>
<div style="left:734.5px;top:359.36px;width:1.0px;height:13.680000000000007px;background:rgba(255,255,255,0.35);"></div>
<div style="left:811.5px;top:359.36px;width:1.0px;height:13.680000000000007px;background:rgba(255,255,255,0.35);"></div>
<div style="left:878.5px;top:359.36px;width:1.0px;height:13.680000000000007px;background:rgba(255,255,255,0.35);"></div>
<div style="left:949.5px;top:359.36px;width:1.0px;height:13.680000000000007px;background:rgba(255,255,255,0.35);"></div>
<div style="left:1019.5px;top:359.36px;width:1.0px;height:13.680000000000007px;background:rgba(255,255,255,0.35);"></div>
<div style="left:1093.5px;top:359.36px;width:1.0px;height:13.680000000000007px;background:rgba(255,255,255,0.35);"></div>
<div style="left:47.00px;top:357.80px;height:18.4px;line-height:18.4px;font-size:9.2px;color:#5b3526;white-space:nowrap;">REORDER</div>
<div style="left:105.00px;top:357.80px;height:18.4px;line-height:18.4px;font-size:9.2px;color:#5b3526;white-space:nowrap;">C123</div>
<div style="left:193.48px;top:357.80px;height:18.4px;line-height:18.4px;font-size:9.2px;color:#5b3526;white-space:nowrap;">20/05/2018</div>
<div style="left:253.00px;top:357.80px;height:18.4px;line-height:18.4px;font-size:9.2px;color:#5b3526;white-space:nowrap;">ITEM C</div>
<div style="left:362.00px;top:357.80px;height:18.4px;line-height:18.4px;font-size:9.2px;color:#5b3526;white-space:nowrap;">Cole</div>
<div style="left:473.00px;top:357.80px;height:18.4px;line-height:18.4px;font-size:9.2px;color:#5b3526;white-space:nowrap;">Basement, Shelf 4</div>
<div style="left:592.00px;top:357.80px;height:18.4px;line-height:18.4px;font-size:9.2px;color:#5b3526;white-space:nowrap;">Item C Description</div>
<div style="left:781.86px;top:357.80px;height:18.4px;line-height:18.4px;font-size:9.2px;color:#5b3526;white-space:nowrap;">$30.00</div>
<div style="left:840.38px;top:357.80px;height:18.4px;line-height:18.4px;font-size:9.2px;color:#5b3526;white-space:nowrap;">45</div>
<div style="left:907.07px;top:357.80px;height:18.4px;line-height:18.4px;font-size:9.2px;color:#5b3526;white-space:nowrap;">$1,350.00</div>
<div style="left:979.88px;top:357.80px;height:18.4px;line-height:18.4px;font-size:9.2px;color:#5b3526;white-space:nowrap;">50</div>
<div style="left:1054.44px;top:357.80px;height:18.4px;line-height:18.4px;font-size:9.2px;color:#5b3526;white-space:nowrap;">2</div>
<div style="left:1138.88px;top:357.80px;height:18.4px;line-height:18.4px;font-size:9.2px;color:#5b3526;white-space:nowrap;">50</div>
<div style="left:37px;top:373.04px;width:1141px;height:13.680000000000007px;background:#efb18d;"></div>
<div style="left:102.5px;top:373.04px;width:1.0px;height:13.680000000000007px;background:rgba(255,255,255,0.35);"></div>
<div style="left:181.5px;top:373.04px;width:1.0px;height:13.680000000000007px;background:rgba(255,255,255,0.35);"></div>
<div style="left:250.5px;top:373.04px;width:1.0px;height:13.680000000000007px;background:rgba(255,255,255,0.35);"></div>
<div style="left:359.5px;top:373.04px;width:1.0px;height:13.680000000000007px;background:rgba(255,255,255,0.35);"></div>
<div style="left:470.5px;top:373.04px;width:1.0px;height:13.680000000000007px;background:rgba(255,255,255,0.35);"></div>
<div style="left:590.5px;top:373.04px;width:1.0px;height:13.680000000000007px;background:rgba(255,255,255,0.35);"></div>
<div style="left:734.5px;top:373.04px;width:1.0px;height:13.680000000000007px;background:rgba(255,255,255,0.35);"></div>
<div style="left:811.5px;top:373.04px;width:1.0px;height:13.680000000000007px;background:rgba(255,255,255,0.35);"></div>
<div style="left:878.5px;top:373.04px;width:1.0px;height:13.680000000000007px;background:rgba(255,255,255,0.35);"></div>
<div style="left:949.5px;top:373.04px;width:1.0px;height:13.680000000000007px;background:rgba(255,255,255,0.35);"></div>
<div style="left:1019.5px;top:373.04px;width:1.0px;height:13.680000000000007px;background:rgba(255,255,255,0.35);"></div>
<div style="left:1093.5px;top:373.04px;width:1.0px;height:13.680000000000007px;background:rgba(255,255,255,0.35);"></div>
<div style="left:47.00px;top:371.48px;height:18.4px;line-height:18.4px;font-size:9.2px;color:#5b3526;white-space:nowrap;">REORDER</div>
<div style="left:105.00px;top:371.48px;height:18.4px;line-height:18.4px;font-size:9.2px;color:#5b3526;white-space:nowrap;">D123</div>
<div style="left:193.48px;top:371.48px;height:18.4px;line-height:18.4px;font-size:9.2px;color:#5b3526;white-space:nowrap;">20/05/2018</div>
<div style="left:253.00px;top:371.48px;height:18.4px;line-height:18.4px;font-size:9.2px;color:#5b3526;white-space:nowrap;">ITEM D</div>
<div style="left:362.00px;top:371.48px;height:18.4px;line-height:18.4px;font-size:9.2px;color:#5b3526;white-space:nowrap;">Cole</div>
<div style="left:473.00px;top:371.48px;height:18.4px;line-height:18.4px;font-size:9.2px;color:#5b3526;white-space:nowrap;">Store Room A, Shelf 2</div>
<div style="left:592.00px;top:371.48px;height:18.4px;line-height:18.4px;font-size:9.2px;color:#5b3526;white-space:nowrap;">Item D Description</div>
<div style="left:781.86px;top:371.48px;height:18.4px;line-height:18.4px;font-size:9.2px;color:#5b3526;white-space:nowrap;">$10.00</div>
<div style="left:840.38px;top:371.48px;height:18.4px;line-height:18.4px;font-size:9.2px;color:#5b3526;white-space:nowrap;">25</div>
<div style="left:914.74px;top:371.48px;height:18.4px;line-height:18.4px;font-size:9.2px;color:#5b3526;white-space:nowrap;">$250.00</div>
<div style="left:979.88px;top:371.48px;height:18.4px;line-height:18.4px;font-size:9.2px;color:#5b3526;white-space:nowrap;">50</div>
<div style="left:1051.88px;top:371.48px;height:18.4px;line-height:18.4px;font-size:9.2px;color:#5b3526;white-space:nowrap;">14</div>
<div style="left:1138.88px;top:371.48px;height:18.4px;line-height:18.4px;font-size:9.2px;color:#5b3526;white-space:nowrap;">10</div>
<div style="left:37px;top:386.72px;width:1141px;height:13.680000000000007px;background:#ffffff;"></div>
<div style="left:102.5px;top:386.72px;width:1.0px;height:13.680000000000007px;background:rgba(255,255,255,0.35);"></div>
<div style="left:181.5px;top:386.72px;width:1.0px;height:13.680000000000007px;background:rgba(255,255,255,0.35);"></div>
<div style="left:250.5px;top:386.72px;width:1.0px;height:13.680000000000007px;background:rgba(255,255,255,0.35);"></div>
<div style="left:359.5px;top:386.72px;width:1.0px;height:13.680000000000007px;background:rgba(255,255,255,0.35);"></div>
<div style="left:470.5px;top:386.72px;width:1.0px;height:13.680000000000007px;background:rgba(255,255,255,0.35);"></div>
<div style="left:590.5px;top:386.72px;width:1.0px;height:13.680000000000007px;background:rgba(255,255,255,0.35);"></div>
<div style="left:734.5px;top:386.72px;width:1.0px;height:13.680000000000007px;background:rgba(255,255,255,0.35);"></div>
<div style="left:811.5px;top:386.72px;width:1.0px;height:13.680000000000007px;background:rgba(255,255,255,0.35);"></div>
<div style="left:878.5px;top:386.72px;width:1.0px;height:13.680000000000007px;background:rgba(255,255,255,0.35);"></div>
<div style="left:949.5px;top:386.72px;width:1.0px;height:13.680000000000007px;background:rgba(255,255,255,0.35);"></div>
<div style="left:1019.5px;top:386.72px;width:1.0px;height:13.680000000000007px;background:rgba(255,255,255,0.35);"></div>
<div style="left:1093.5px;top:386.72px;width:1.0px;height:13.680000000000007px;background:rgba(255,255,255,0.35);"></div>
<div style="left:63.35px;top:385.16px;height:18.4px;line-height:18.4px;font-size:9.2px;color:#333333;white-space:nowrap;">OK</div>
<div style="left:105.00px;top:385.16px;height:18.4px;line-height:18.4px;font-size:9.2px;color:#333333;white-space:nowrap;">E123</div>
<div style="left:193.48px;top:385.16px;height:18.4px;line-height:18.4px;font-size:9.2px;color:#333333;white-space:nowrap;">20/05/2018</div>
<div style="left:253.00px;top:385.16px;height:18.4px;line-height:18.4px;font-size:9.2px;color:#333333;white-space:nowrap;">ITEM E</div>
<div style="left:362.00px;top:385.16px;height:18.4px;line-height:18.4px;font-size:9.2px;color:#333333;white-space:nowrap;">Cole</div>
<div style="left:473.00px;top:385.16px;height:18.4px;line-height:18.4px;font-size:9.2px;color:#333333;white-space:nowrap;">Outdoor Pallet</div>
<div style="left:592.00px;top:385.16px;height:18.4px;line-height:18.4px;font-size:9.2px;color:#333333;white-space:nowrap;">Item E Description</div>
<div style="left:781.86px;top:385.16px;height:18.4px;line-height:18.4px;font-size:9.2px;color:#333333;white-space:nowrap;">$20.00</div>
<div style="left:837.82px;top:385.16px;height:18.4px;line-height:18.4px;font-size:9.2px;color:#333333;white-space:nowrap;">200</div>
<div style="left:907.07px;top:385.16px;height:18.4px;line-height:18.4px;font-size:9.2px;color:#333333;white-space:nowrap;">$4,000.00</div>
<div style="left:979.88px;top:385.16px;height:18.4px;line-height:18.4px;font-size:9.2px;color:#333333;white-space:nowrap;">50</div>
<div style="left:1051.88px;top:385.16px;height:18.4px;line-height:18.4px;font-size:9.2px;color:#333333;white-space:nowrap;">30</div>
<div style="left:1136.32px;top:385.16px;height:18.4px;line-height:18.4px;font-size:9.2px;color:#333333;white-space:nowrap;">100</div>
<div style="left:37px;top:400.4px;width:1141px;height:13.680000000000007px;background:#e4ebe9;"></div>
<div style="left:102.5px;top:400.4px;width:1.0px;height:13.680000000000007px;background:rgba(255,255,255,0.35);"></div>
<div style="left:181.5px;top:400.4px;width:1.0px;height:13.680000000000007px;background:rgba(255,255,255,0.35);"></div>
<div style="left:250.5px;top:400.4px;width:1.0px;height:13.680000000000007px;background:rgba(255,255,255,0.35);"></div>
<div style="left:359.5px;top:400.4px;width:1.0px;height:13.680000000000007px;background:rgba(255,255,255,0.35);"></div>
<div style="left:470.5px;top:400.4px;width:1.0px;height:13.680000000000007px;background:rgba(255,255,255,0.35);"></div>
<div style="left:590.5px;top:400.4px;width:1.0px;height:13.680000000000007px;background:rgba(255,255,255,0.35);"></div>
<div style="left:734.5px;top:400.4px;width:1.0px;height:13.680000000000007px;background:rgba(255,255,255,0.35);"></div>
<div style="left:811.5px;top:400.4px;width:1.0px;height:13.680000000000007px;background:rgba(255,255,255,0.35);"></div>
<div style="left:878.5px;top:400.4px;width:1.0px;height:13.680000000000007px;background:rgba(255,255,255,0.35);"></div>
<div style="left:949.5px;top:400.4px;width:1.0px;height:13.680000000000007px;background:rgba(255,255,255,0.35);"></div>
<div style="left:1019.5px;top:400.4px;width:1.0px;height:13.680000000000007px;background:rgba(255,255,255,0.35);"></div>
<div style="left:1093.5px;top:400.4px;width:1.0px;height:13.680000000000007px;background:rgba(255,255,255,0.35);"></div>
<div style="left:63.35px;top:398.84px;height:18.4px;line-height:18.4px;font-size:9.2px;color:#333333;white-space:nowrap;">OK</div>
<div style="left:105.00px;top:398.84px;height:18.4px;line-height:18.4px;font-size:9.2px;color:#333333;white-space:nowrap;">F123</div>
<div style="left:193.48px;top:398.84px;height:18.4px;line-height:18.4px;font-size:9.2px;color:#333333;white-space:nowrap;">20/05/2018</div>
<div style="left:253.00px;top:398.84px;height:18.4px;line-height:18.4px;font-size:9.2px;color:#333333;white-space:nowrap;">ITEM F</div>
<div style="left:362.00px;top:398.84px;height:18.4px;line-height:18.4px;font-size:9.2px;color:#333333;white-space:nowrap;">Cole</div>
<div style="left:473.00px;top:398.84px;height:18.4px;line-height:18.4px;font-size:9.2px;color:#333333;white-space:nowrap;">Basement, Shelf 4</div>
<div style="left:592.00px;top:398.84px;height:18.4px;line-height:18.4px;font-size:9.2px;color:#333333;white-space:nowrap;">Item F Description</div>
<div style="left:781.86px;top:398.84px;height:18.4px;line-height:18.4px;font-size:9.2px;color:#333333;white-space:nowrap;">$30.00</div>
<div style="left:837.82px;top:398.84px;height:18.4px;line-height:18.4px;font-size:9.2px;color:#333333;white-space:nowrap;">100</div>
<div style="left:907.07px;top:398.84px;height:18.4px;line-height:18.4px;font-size:9.2px;color:#333333;white-space:nowrap;">$3,000.00</div>
<div style="left:979.88px;top:398.84px;height:18.4px;line-height:18.4px;font-size:9.2px;color:#333333;white-space:nowrap;">50</div>
<div style="left:1054.44px;top:398.84px;height:18.4px;line-height:18.4px;font-size:9.2px;color:#333333;white-space:nowrap;">2</div>
<div style="left:1138.88px;top:398.84px;height:18.4px;line-height:18.4px;font-size:9.2px;color:#333333;white-space:nowrap;">20</div>
<div style="left:37px;top:414.08px;width:1141px;height:13.680000000000007px;background:#c7c7c7;"></div>
<div style="left:102.5px;top:414.08px;width:1.0px;height:13.680000000000007px;background:rgba(255,255,255,0.35);"></div>
<div style="left:181.5px;top:414.08px;width:1.0px;height:13.680000000000007px;background:rgba(255,255,255,0.35);"></div>
<div style="left:250.5px;top:414.08px;width:1.0px;height:13.680000000000007px;background:rgba(255,255,255,0.35);"></div>
<div style="left:359.5px;top:414.08px;width:1.0px;height:13.680000000000007px;background:rgba(255,255,255,0.35);"></div>
<div style="left:470.5px;top:414.08px;width:1.0px;height:13.680000000000007px;background:rgba(255,255,255,0.35);"></div>
<div style="left:590.5px;top:414.08px;width:1.0px;height:13.680000000000007px;background:rgba(255,255,255,0.35);"></div>
<div style="left:734.5px;top:414.08px;width:1.0px;height:13.680000000000007px;background:rgba(255,255,255,0.35);"></div>
<div style="left:811.5px;top:414.08px;width:1.0px;height:13.680000000000007px;background:rgba(255,255,255,0.35);"></div>
<div style="left:878.5px;top:414.08px;width:1.0px;height:13.680000000000007px;background:rgba(255,255,255,0.35);"></div>
<div style="left:949.5px;top:414.08px;width:1.0px;height:13.680000000000007px;background:rgba(255,255,255,0.35);"></div>
<div style="left:1019.5px;top:414.08px;width:1.0px;height:13.680000000000007px;background:rgba(255,255,255,0.35);"></div>
<div style="left:1093.5px;top:414.08px;width:1.0px;height:13.680000000000007px;background:rgba(255,255,255,0.35);"></div>
<div style="left:47.00px;top:412.52px;height:18.4px;line-height:18.4px;font-size:9.2px;color:#828282;white-space:nowrap;">REORDER</div>
<div style="left:105.00px;top:412.52px;height:18.4px;line-height:18.4px;font-size:9.2px;color:#828282;white-space:nowrap;">G123</div>
<div style="left:193.48px;top:412.52px;height:18.4px;line-height:18.4px;font-size:9.2px;color:#828282;white-space:nowrap;">20/05/2018</div>
<div style="left:253.00px;top:412.52px;height:18.4px;line-height:18.4px;font-size:9.2px;color:#828282;white-space:nowrap;">ITEM G</div>
<div style="left:362.00px;top:412.52px;height:18.4px;line-height:18.4px;font-size:9.2px;color:#828282;white-space:nowrap;">Cole</div>
<div style="left:473.00px;top:412.52px;height:18.4px;line-height:18.4px;font-size:9.2px;color:#828282;white-space:nowrap;">Store Room A, Shelf 2</div>
<div style="left:592.00px;top:412.52px;height:18.4px;line-height:18.4px;font-size:9.2px;color:#828282;white-space:nowrap;">Item G Description</div>
<div style="left:781.86px;top:412.52px;height:18.4px;line-height:18.4px;font-size:9.2px;color:#828282;white-space:nowrap;">$10.00</div>
<div style="left:840.38px;top:412.52px;height:18.4px;line-height:18.4px;font-size:9.2px;color:#828282;white-space:nowrap;">45</div>
<div style="left:914.74px;top:412.52px;height:18.4px;line-height:18.4px;font-size:9.2px;color:#828282;white-space:nowrap;">$450.00</div>
<div style="left:979.88px;top:412.52px;height:18.4px;line-height:18.4px;font-size:9.2px;color:#828282;white-space:nowrap;">50</div>
<div style="left:1051.88px;top:412.52px;height:18.4px;line-height:18.4px;font-size:9.2px;color:#828282;white-space:nowrap;">14</div>
<div style="left:1138.88px;top:412.52px;height:18.4px;line-height:18.4px;font-size:9.2px;color:#828282;white-space:nowrap;">50</div>
<div style="left:37px;top:427.76px;width:1141px;height:13.680000000000007px;background:#efb18d;"></div>
<div style="left:102.5px;top:427.76px;width:1.0px;height:13.680000000000007px;background:rgba(255,255,255,0.35);"></div>
<div style="left:181.5px;top:427.76px;width:1.0px;height:13.680000000000007px;background:rgba(255,255,255,0.35);"></div>
<div style="left:250.5px;top:427.76px;width:1.0px;height:13.680000000000007px;background:rgba(255,255,255,0.35);"></div>
<div style="left:359.5px;top:427.76px;width:1.0px;height:13.680000000000007px;background:rgba(255,255,255,0.35);"></div>
<div style="left:470.5px;top:427.76px;width:1.0px;height:13.680000000000007px;background:rgba(255,255,255,0.35);"></div>
<div style="left:590.5px;top:427.76px;width:1.0px;height:13.680000000000007px;background:rgba(255,255,255,0.35);"></div>
<div style="left:734.5px;top:427.76px;width:1.0px;height:13.680000000000007px;background:rgba(255,255,255,0.35);"></div>
<div style="left:811.5px;top:427.76px;width:1.0px;height:13.680000000000007px;background:rgba(255,255,255,0.35);"></div>
<div style="left:878.5px;top:427.76px;width:1.0px;height:13.680000000000007px;background:rgba(255,255,255,0.35);"></div>
<div style="left:949.5px;top:427.76px;width:1.0px;height:13.680000000000007px;background:rgba(255,255,255,0.35);"></div>
<div style="left:1019.5px;top:427.76px;width:1.0px;height:13.680000000000007px;background:rgba(255,255,255,0.35);"></div>
<div style="left:1093.5px;top:427.76px;width:1.0px;height:13.680000000000007px;background:rgba(255,255,255,0.35);"></div>
<div style="left:47.00px;top:426.20px;height:18.4px;line-height:18.4px;font-size:9.2px;color:#5b3526;white-space:nowrap;">REORDER</div>
<div style="left:105.00px;top:426.20px;height:18.4px;line-height:18.4px;font-size:9.2px;color:#5b3526;white-space:nowrap;">H123</div>
<div style="left:193.48px;top:426.20px;height:18.4px;line-height:18.4px;font-size:9.2px;color:#5b3526;white-space:nowrap;">20/05/2018</div>
<div style="left:253.00px;top:426.20px;height:18.4px;line-height:18.4px;font-size:9.2px;color:#5b3526;white-space:nowrap;">ITEM H</div>
<div style="left:362.00px;top:426.20px;height:18.4px;line-height:18.4px;font-size:9.2px;color:#5b3526;white-space:nowrap;">Cole</div>
<div style="left:473.00px;top:426.20px;height:18.4px;line-height:18.4px;font-size:9.2px;color:#5b3526;white-space:nowrap;">Basement, Shelf 4</div>
<div style="left:592.00px;top:426.20px;height:18.4px;line-height:18.4px;font-size:9.2px;color:#5b3526;white-space:nowrap;">Item H Description</div>
<div style="left:781.86px;top:426.20px;height:18.4px;line-height:18.4px;font-size:9.2px;color:#5b3526;white-space:nowrap;">$20.00</div>
<div style="left:840.38px;top:426.20px;height:18.4px;line-height:18.4px;font-size:9.2px;color:#5b3526;white-space:nowrap;">25</div>
<div style="left:914.74px;top:426.20px;height:18.4px;line-height:18.4px;font-size:9.2px;color:#5b3526;white-space:nowrap;">$500.00</div>
<div style="left:979.88px;top:426.20px;height:18.4px;line-height:18.4px;font-size:9.2px;color:#5b3526;white-space:nowrap;">50</div>
<div style="left:1051.88px;top:426.20px;height:18.4px;line-height:18.4px;font-size:9.2px;color:#5b3526;white-space:nowrap;">30</div>
<div style="left:1138.88px;top:426.20px;height:18.4px;line-height:18.4px;font-size:9.2px;color:#5b3526;white-space:nowrap;">10</div>
<div style="left:37px;top:441.44px;width:1141px;height:13.680000000000007px;background:#ffffff;"></div>
<div style="left:102.5px;top:441.44px;width:1.0px;height:13.680000000000007px;background:#dde2e0;"></div>
<div style="left:181.5px;top:441.44px;width:1.0px;height:13.680000000000007px;background:#dde2e0;"></div>
<div style="left:250.5px;top:441.44px;width:1.0px;height:13.680000000000007px;background:#dde2e0;"></div>
<div style="left:359.5px;top:441.44px;width:1.0px;height:13.680000000000007px;background:#dde2e0;"></div>
<div style="left:470.5px;top:441.44px;width:1.0px;height:13.680000000000007px;background:#dde2e0;"></div>
<div style="left:590.5px;top:441.44px;width:1.0px;height:13.680000000000007px;background:#dde2e0;"></div>
<div style="left:734.5px;top:441.44px;width:1.0px;height:13.680000000000007px;background:#dde2e0;"></div>
<div style="left:811.5px;top:441.44px;width:1.0px;height:13.680000000000007px;background:#dde2e0;"></div>
<div style="left:878.5px;top:441.44px;width:1.0px;height:13.680000000000007px;background:#dde2e0;"></div>
<div style="left:949.5px;top:441.44px;width:1.0px;height:13.680000000000007px;background:#dde2e0;"></div>
<div style="left:1019.5px;top:441.44px;width:1.0px;height:13.680000000000007px;background:#dde2e0;"></div>
<div style="left:1093.5px;top:441.44px;width:1.0px;height:13.680000000000007px;background:#dde2e0;"></div>
<div style="left:63.35px;top:439.88px;height:18.4px;line-height:18.4px;font-size:9.2px;color:#333;white-space:nowrap;">OK</div>
<div style="left:924.98px;top:439.88px;height:18.4px;line-height:18.4px;font-size:9.2px;color:#333;white-space:nowrap;">$0.00</div>
<div style="left:37px;top:455.12px;width:1141px;height:13.680000000000007px;background:#e4ebe9;"></div>
<div style="left:102.5px;top:455.12px;width:1.0px;height:13.680000000000007px;background:#dde2e0;"></div>
<div style="left:181.5px;top:455.12px;width:1.0px;height:13.680000000000007px;background:#dde2e0;"></div>
<div style="left:250.5px;top:455.12px;width:1.0px;height:13.680000000000007px;background:#dde2e0;"></div>
<div style="left:359.5px;top:455.12px;width:1.0px;height:13.680000000000007px;background:#dde2e0;"></div>
<div style="left:470.5px;top:455.12px;width:1.0px;height:13.680000000000007px;background:#dde2e0;"></div>
<div style="left:590.5px;top:455.12px;width:1.0px;height:13.680000000000007px;background:#dde2e0;"></div>
<div style="left:734.5px;top:455.12px;width:1.0px;height:13.680000000000007px;background:#dde2e0;"></div>
<div style="left:811.5px;top:455.12px;width:1.0px;height:13.680000000000007px;background:#dde2e0;"></div>
<div style="left:878.5px;top:455.12px;width:1.0px;height:13.680000000000007px;background:#dde2e0;"></div>
<div style="left:949.5px;top:455.12px;width:1.0px;height:13.680000000000007px;background:#dde2e0;"></div>
<div style="left:1019.5px;top:455.12px;width:1.0px;height:13.680000000000007px;background:#dde2e0;"></div>
<div style="left:1093.5px;top:455.12px;width:1.0px;height:13.680000000000007px;background:#dde2e0;"></div>
<div style="left:63.35px;top:453.56px;height:18.4px;line-height:18.4px;font-size:9.2px;color:#333;white-space:nowrap;">OK</div>
<div style="left:924.98px;top:453.56px;height:18.4px;line-height:18.4px;font-size:9.2px;color:#333;white-space:nowrap;">$0.00</div>
<div style="left:37px;top:468.8px;width:1141px;height:13.680000000000007px;background:#ffffff;"></div>
<div style="left:102.5px;top:468.8px;width:1.0px;height:13.680000000000007px;background:#dde2e0;"></div>
<div style="left:181.5px;top:468.8px;width:1.0px;height:13.680000000000007px;background:#dde2e0;"></div>
<div style="left:250.5px;top:468.8px;width:1.0px;height:13.680000000000007px;background:#dde2e0;"></div>
<div style="left:359.5px;top:468.8px;width:1.0px;height:13.680000000000007px;background:#dde2e0;"></div>
<div style="left:470.5px;top:468.8px;width:1.0px;height:13.680000000000007px;background:#dde2e0;"></div>
<div style="left:590.5px;top:468.8px;width:1.0px;height:13.680000000000007px;background:#dde2e0;"></div>
<div style="left:734.5px;top:468.8px;width:1.0px;height:13.680000000000007px;background:#dde2e0;"></div>
<div style="left:811.5px;top:468.8px;width:1.0px;height:13.680000000000007px;background:#dde2e0;"></div>
<div style="left:878.5px;top:468.8px;width:1.0px;height:13.680000000000007px;background:#dde2e0;"></div>
<div style="left:949.5px;top:468.8px;width:1.0px;height:13.680000000000007px;background:#dde2e0;"></div>
<div style="left:1019.5px;top:468.8px;width:1.0px;height:13.680000000000007px;background:#dde2e0;"></div>
<div style="left:1093.5px;top:468.8px;width:1.0px;height:13.680000000000007px;background:#dde2e0;"></div>
<div style="left:63.35px;top:467.24px;height:18.4px;line-height:18.4px;font-size:9.2px;color:#333;white-space:nowrap;">OK</div>
<div style="left:924.98px;top:467.24px;height:18.4px;line-height:18.4px;font-size:9.2px;color:#333;white-space:nowrap;">$0.00</div>
<div style="left:37px;top:482.48px;width:1141px;height:13.680000000000007px;background:#e4ebe9;"></div>
<div style="left:102.5px;top:482.48px;width:1.0px;height:13.680000000000007px;background:#dde2e0;"></div>
<div style="left:181.5px;top:482.48px;width:1.0px;height:13.680000000000007px;background:#dde2e0;"></div>
<div style="left:250.5px;top:482.48px;width:1.0px;height:13.680000000000007px;background:#dde2e0;"></div>
<div style="left:359.5px;top:482.48px;width:1.0px;height:13.680000000000007px;background:#dde2e0;"></div>
<div style="left:470.5px;top:482.48px;width:1.0px;height:13.680000000000007px;background:#dde2e0;"></div>
<div style="left:590.5px;top:482.48px;width:1.0px;height:13.680000000000007px;background:#dde2e0;"></div>
<div style="left:734.5px;top:482.48px;width:1.0px;height:13.680000000000007px;background:#dde2e0;"></div>
<div style="left:811.5px;top:482.48px;width:1.0px;height:13.680000000000007px;background:#dde2e0;"></div>
<div style="left:878.5px;top:482.48px;width:1.0px;height:13.680000000000007px;background:#dde2e0;"></div>
<div style="left:949.5px;top:482.48px;width:1.0px;height:13.680000000000007px;background:#dde2e0;"></div>
<div style="left:1019.5px;top:482.48px;width:1.0px;height:13.680000000000007px;background:#dde2e0;"></div>
<div style="left:1093.5px;top:482.48px;width:1.0px;height:13.680000000000007px;background:#dde2e0;"></div>
<div style="left:63.35px;top:480.92px;height:18.4px;line-height:18.4px;font-size:9.2px;color:#333;white-space:nowrap;">OK</div>
<div style="left:924.98px;top:480.92px;height:18.4px;line-height:18.4px;font-size:9.2px;color:#333;white-space:nowrap;">$0.00</div>
<div style="left:37px;top:496.15999999999997px;width:1141px;height:13.680000000000007px;background:#ffffff;"></div>
<div style="left:102.5px;top:496.15999999999997px;width:1.0px;height:13.680000000000007px;background:#dde2e0;"></div>
<div style="left:181.5px;top:496.15999999999997px;width:1.0px;height:13.680000000000007px;background:#dde2e0;"></div>
<div style="left:250.5px;top:496.15999999999997px;width:1.0px;height:13.680000000000007px;background:#dde2e0;"></div>
<div style="left:359.5px;top:496.15999999999997px;width:1.0px;height:13.680000000000007px;background:#dde2e0;"></div>
<div style="left:470.5px;top:496.15999999999997px;width:1.0px;height:13.680000000000007px;background:#dde2e0;"></div>
<div style="left:590.5px;top:496.15999999999997px;width:1.0px;height:13.680000000000007px;background:#dde2e0;"></div>
<div style="left:734.5px;top:496.15999999999997px;width:1.0px;height:13.680000000000007px;background:#dde2e0;"></div>
<div style="left:811.5px;top:496.15999999999997px;width:1.0px;height:13.680000000000007px;background:#dde2e0;"></div>
<div style="left:878.5px;top:496.15999999999997px;width:1.0px;height:13.680000000000007px;background:#dde2e0;"></div>
<div style="left:949.5px;top:496.15999999999997px;width:1.0px;height:13.680000000000007px;background:#dde2e0;"></div>
<div style="left:1019.5px;top:496.15999999999997px;width:1.0px;height:13.680000000000007px;background:#dde2e0;"></div>
<div style="left:1093.5px;top:496.15999999999997px;width:1.0px;height:13.680000000000007px;background:#dde2e0;"></div>
<div style="left:63.35px;top:494.60px;height:18.4px;line-height:18.4px;font-size:9.2px;color:#333;white-space:nowrap;">OK</div>
<div style="left:924.98px;top:494.60px;height:18.4px;line-height:18.4px;font-size:9.2px;color:#333;white-space:nowrap;">$0.00</div>
<div style="left:37px;top:509.84000000000003px;width:1141px;height:13.67999999999995px;background:#e4ebe9;"></div>
<div style="left:102.5px;top:509.84000000000003px;width:1.0px;height:13.67999999999995px;background:#dde2e0;"></div>
<div style="left:181.5px;top:509.84000000000003px;width:1.0px;height:13.67999999999995px;background:#dde2e0;"></div>
<div style="left:250.5px;top:509.84000000000003px;width:1.0px;height:13.67999999999995px;background:#dde2e0;"></div>
<div style="left:359.5px;top:509.84000000000003px;width:1.0px;height:13.67999999999995px;background:#dde2e0;"></div>
<div style="left:470.5px;top:509.84000000000003px;width:1.0px;height:13.67999999999995px;background:#dde2e0;"></div>
<div style="left:590.5px;top:509.84000000000003px;width:1.0px;height:13.67999999999995px;background:#dde2e0;"></div>
<div style="left:734.5px;top:509.84000000000003px;width:1.0px;height:13.67999999999995px;background:#dde2e0;"></div>
<div style="left:811.5px;top:509.84000000000003px;width:1.0px;height:13.67999999999995px;background:#dde2e0;"></div>
<div style="left:878.5px;top:509.84000000000003px;width:1.0px;height:13.67999999999995px;background:#dde2e0;"></div>
<div style="left:949.5px;top:509.84000000000003px;width:1.0px;height:13.67999999999995px;background:#dde2e0;"></div>
<div style="left:1019.5px;top:509.84000000000003px;width:1.0px;height:13.67999999999995px;background:#dde2e0;"></div>
<div style="left:1093.5px;top:509.84000000000003px;width:1.0px;height:13.67999999999995px;background:#dde2e0;"></div>
<div style="left:63.35px;top:508.28px;height:18.4px;line-height:18.4px;font-size:9.2px;color:#333;white-space:nowrap;">OK</div>
<div style="left:924.98px;top:508.28px;height:18.4px;line-height:18.4px;font-size:9.2px;color:#333;white-space:nowrap;">$0.00</div>
<div style="left:37px;top:523.52px;width:1141px;height:13.67999999999995px;background:#ffffff;"></div>
<div style="left:102.5px;top:523.52px;width:1.0px;height:13.67999999999995px;background:#dde2e0;"></div>
<div style="left:181.5px;top:523.52px;width:1.0px;height:13.67999999999995px;background:#dde2e0;"></div>
<div style="left:250.5px;top:523.52px;width:1.0px;height:13.67999999999995px;background:#dde2e0;"></div>
<div style="left:359.5px;top:523.52px;width:1.0px;height:13.67999999999995px;background:#dde2e0;"></div>
<div style="left:470.5px;top:523.52px;width:1.0px;height:13.67999999999995px;background:#dde2e0;"></div>
<div style="left:590.5px;top:523.52px;width:1.0px;height:13.67999999999995px;background:#dde2e0;"></div>
<div style="left:734.5px;top:523.52px;width:1.0px;height:13.67999999999995px;background:#dde2e0;"></div>
<div style="left:811.5px;top:523.52px;width:1.0px;height:13.67999999999995px;background:#dde2e0;"></div>
<div style="left:878.5px;top:523.52px;width:1.0px;height:13.67999999999995px;background:#dde2e0;"></div>
<div style="left:949.5px;top:523.52px;width:1.0px;height:13.67999999999995px;background:#dde2e0;"></div>
<div style="left:1019.5px;top:523.52px;width:1.0px;height:13.67999999999995px;background:#dde2e0;"></div>
<div style="left:1093.5px;top:523.52px;width:1.0px;height:13.67999999999995px;background:#dde2e0;"></div>
<div style="left:63.35px;top:521.96px;height:18.4px;line-height:18.4px;font-size:9.2px;color:#333;white-space:nowrap;">OK</div>
<div style="left:924.98px;top:521.96px;height:18.4px;line-height:18.4px;font-size:9.2px;color:#333;white-space:nowrap;">$0.00</div>
<div style="left:37px;top:537.2px;width:1141px;height:13.67999999999995px;background:#e4ebe9;"></div>
<div style="left:102.5px;top:537.2px;width:1.0px;height:13.67999999999995px;background:#dde2e0;"></div>
<div style="left:181.5px;top:537.2px;width:1.0px;height:13.67999999999995px;background:#dde2e0;"></div>
<div style="left:250.5px;top:537.2px;width:1.0px;height:13.67999999999995px;background:#dde2e0;"></div>
<div style="left:359.5px;top:537.2px;width:1.0px;height:13.67999999999995px;background:#dde2e0;"></div>
<div style="left:470.5px;top:537.2px;width:1.0px;height:13.67999999999995px;background:#dde2e0;"></div>
<div style="left:590.5px;top:537.2px;width:1.0px;height:13.67999999999995px;background:#dde2e0;"></div>
<div style="left:734.5px;top:537.2px;width:1.0px;height:13.67999999999995px;background:#dde2e0;"></div>
<div style="left:811.5px;top:537.2px;width:1.0px;height:13.67999999999995px;background:#dde2e0;"></div>
<div style="left:878.5px;top:537.2px;width:1.0px;height:13.67999999999995px;background:#dde2e0;"></div>
<div style="left:949.5px;top:537.2px;width:1.0px;height:13.67999999999995px;background:#dde2e0;"></div>
<div style="left:1019.5px;top:537.2px;width:1.0px;height:13.67999999999995px;background:#dde2e0;"></div>
<div style="left:1093.5px;top:537.2px;width:1.0px;height:13.67999999999995px;background:#dde2e0;"></div>
<div style="left:63.35px;top:535.64px;height:18.4px;line-height:18.4px;font-size:9.2px;color:#333;white-space:nowrap;">OK</div>
<div style="left:924.98px;top:535.64px;height:18.4px;line-height:18.4px;font-size:9.2px;color:#333;white-space:nowrap;">$0.00</div>
<div style="left:37px;top:550.88px;width:1141px;height:13.67999999999995px;background:#ffffff;"></div>
<div style="left:102.5px;top:550.88px;width:1.0px;height:13.67999999999995px;background:#dde2e0;"></div>
<div style="left:181.5px;top:550.88px;width:1.0px;height:13.67999999999995px;background:#dde2e0;"></div>
<div style="left:250.5px;top:550.88px;width:1.0px;height:13.67999999999995px;background:#dde2e0;"></div>
<div style="left:359.5px;top:550.88px;width:1.0px;height:13.67999999999995px;background:#dde2e0;"></div>
<div style="left:470.5px;top:550.88px;width:1.0px;height:13.67999999999995px;background:#dde2e0;"></div>
<div style="left:590.5px;top:550.88px;width:1.0px;height:13.67999999999995px;background:#dde2e0;"></div>
<div style="left:734.5px;top:550.88px;width:1.0px;height:13.67999999999995px;background:#dde2e0;"></div>
<div style="left:811.5px;top:550.88px;width:1.0px;height:13.67999999999995px;background:#dde2e0;"></div>
<div style="left:878.5px;top:550.88px;width:1.0px;height:13.67999999999995px;background:#dde2e0;"></div>
<div style="left:949.5px;top:550.88px;width:1.0px;height:13.67999999999995px;background:#dde2e0;"></div>
<div style="left:1019.5px;top:550.88px;width:1.0px;height:13.67999999999995px;background:#dde2e0;"></div>
<div style="left:1093.5px;top:550.88px;width:1.0px;height:13.67999999999995px;background:#dde2e0;"></div>
<div style="left:63.35px;top:549.32px;height:18.4px;line-height:18.4px;font-size:9.2px;color:#333;white-space:nowrap;">OK</div>
<div style="left:924.98px;top:549.32px;height:18.4px;line-height:18.4px;font-size:9.2px;color:#333;white-space:nowrap;">$0.00</div>
<div style="left:37px;top:564.56px;width:1141px;height:13.67999999999995px;background:#e4ebe9;"></div>
<div style="left:102.5px;top:564.56px;width:1.0px;height:13.67999999999995px;background:#dde2e0;"></div>
<div style="left:181.5px;top:564.56px;width:1.0px;height:13.67999999999995px;background:#dde2e0;"></div>
<div style="left:250.5px;top:564.56px;width:1.0px;height:13.67999999999995px;background:#dde2e0;"></div>
<div style="left:359.5px;top:564.56px;width:1.0px;height:13.67999999999995px;background:#dde2e0;"></div>
<div style="left:470.5px;top:564.56px;width:1.0px;height:13.67999999999995px;background:#dde2e0;"></div>
<div style="left:590.5px;top:564.56px;width:1.0px;height:13.67999999999995px;background:#dde2e0;"></div>
<div style="left:734.5px;top:564.56px;width:1.0px;height:13.67999999999995px;background:#dde2e0;"></div>
<div style="left:811.5px;top:564.56px;width:1.0px;height:13.67999999999995px;background:#dde2e0;"></div>
<div style="left:878.5px;top:564.56px;width:1.0px;height:13.67999999999995px;background:#dde2e0;"></div>
<div style="left:949.5px;top:564.56px;width:1.0px;height:13.67999999999995px;background:#dde2e0;"></div>
<div style="left:1019.5px;top:564.56px;width:1.0px;height:13.67999999999995px;background:#dde2e0;"></div>
<div style="left:1093.5px;top:564.56px;width:1.0px;height:13.67999999999995px;background:#dde2e0;"></div>
<div style="left:63.35px;top:563.00px;height:18.4px;line-height:18.4px;font-size:9.2px;color:#333;white-space:nowrap;">OK</div>
<div style="left:924.98px;top:563.00px;height:18.4px;line-height:18.4px;font-size:9.2px;color:#333;white-space:nowrap;">$0.00</div>
<div style="left:37px;top:578.24px;width:1141px;height:13.67999999999995px;background:#ffffff;"></div>
<div style="left:102.5px;top:578.24px;width:1.0px;height:13.67999999999995px;background:#dde2e0;"></div>
<div style="left:181.5px;top:578.24px;width:1.0px;height:13.67999999999995px;background:#dde2e0;"></div>
<div style="left:250.5px;top:578.24px;width:1.0px;height:13.67999999999995px;background:#dde2e0;"></div>
<div style="left:359.5px;top:578.24px;width:1.0px;height:13.67999999999995px;background:#dde2e0;"></div>
<div style="left:470.5px;top:578.24px;width:1.0px;height:13.67999999999995px;background:#dde2e0;"></div>
<div style="left:590.5px;top:578.24px;width:1.0px;height:13.67999999999995px;background:#dde2e0;"></div>
<div style="left:734.5px;top:578.24px;width:1.0px;height:13.67999999999995px;background:#dde2e0;"></div>
<div style="left:811.5px;top:578.24px;width:1.0px;height:13.67999999999995px;background:#dde2e0;"></div>
<div style="left:878.5px;top:578.24px;width:1.0px;height:13.67999999999995px;background:#dde2e0;"></div>
<div style="left:949.5px;top:578.24px;width:1.0px;height:13.67999999999995px;background:#dde2e0;"></div>
<div style="left:1019.5px;top:578.24px;width:1.0px;height:13.67999999999995px;background:#dde2e0;"></div>
<div style="left:1093.5px;top:578.24px;width:1.0px;height:13.67999999999995px;background:#dde2e0;"></div>
<div style="left:63.35px;top:576.68px;height:18.4px;line-height:18.4px;font-size:9.2px;color:#333;white-space:nowrap;">OK</div>
<div style="left:924.98px;top:576.68px;height:18.4px;line-height:18.4px;font-size:9.2px;color:#333;white-space:nowrap;">$0.00</div>
<div style="left:37px;top:591.9200000000001px;width:1141px;height:13.67999999999995px;background:#e4ebe9;"></div>
<div style="left:102.5px;top:591.9200000000001px;width:1.0px;height:13.67999999999995px;background:#dde2e0;"></div>
<div style="left:181.5px;top:591.9200000000001px;width:1.0px;height:13.67999999999995px;background:#dde2e0;"></div>
<div style="left:250.5px;top:591.9200000000001px;width:1.0px;height:13.67999999999995px;background:#dde2e0;"></div>
<div style="left:359.5px;top:591.9200000000001px;width:1.0px;height:13.67999999999995px;background:#dde2e0;"></div>
<div style="left:470.5px;top:591.9200000000001px;width:1.0px;height:13.67999999999995px;background:#dde2e0;"></div>
<div style="left:590.5px;top:591.9200000000001px;width:1.0px;height:13.67999999999995px;background:#dde2e0;"></div>
<div style="left:734.5px;top:591.9200000000001px;width:1.0px;height:13.67999999999995px;background:#dde2e0;"></div>
<div style="left:811.5px;top:591.9200000000001px;width:1.0px;height:13.67999999999995px;background:#dde2e0;"></div>
<div style="left:878.5px;top:591.9200000000001px;width:1.0px;height:13.67999999999995px;background:#dde2e0;"></div>
<div style="left:949.5px;top:591.9200000000001px;width:1.0px;height:13.67999999999995px;background:#dde2e0;"></div>
<div style="left:1019.5px;top:591.9200000000001px;width:1.0px;height:13.67999999999995px;background:#dde2e0;"></div>
<div style="left:1093.5px;top:591.9200000000001px;width:1.0px;height:13.67999999999995px;background:#dde2e0;"></div>
<div style="left:63.35px;top:590.36px;height:18.4px;line-height:18.4px;font-size:9.2px;color:#333;white-space:nowrap;">OK</div>
<div style="left:924.98px;top:590.36px;height:18.4px;line-height:18.4px;font-size:9.2px;color:#333;white-space:nowrap;">$0.00</div>
<div style="left:37px;top:605.6px;width:1141px;height:13.67999999999995px;background:#ffffff;"></div>
<div style="left:102.5px;top:605.6px;width:1.0px;height:13.67999999999995px;background:#dde2e0;"></div>
<div style="left:181.5px;top:605.6px;width:1.0px;height:13.67999999999995px;background:#dde2e0;"></div>
<div style="left:250.5px;top:605.6px;width:1.0px;height:13.67999999999995px;background:#dde2e0;"></div>
<div style="left:359.5px;top:605.6px;width:1.0px;height:13.67999999999995px;background:#dde2e0;"></div>
<div style="left:470.5px;top:605.6px;width:1.0px;height:13.67999999999995px;background:#dde2e0;"></div>
<div style="left:590.5px;top:605.6px;width:1.0px;height:13.67999999999995px;background:#dde2e0;"></div>
<div style="left:734.5px;top:605.6px;width:1.0px;height:13.67999999999995px;background:#dde2e0;"></div>
<div style="left:811.5px;top:605.6px;width:1.0px;height:13.67999999999995px;background:#dde2e0;"></div>
<div style="left:878.5px;top:605.6px;width:1.0px;height:13.67999999999995px;background:#dde2e0;"></div>
<div style="left:949.5px;top:605.6px;width:1.0px;height:13.67999999999995px;background:#dde2e0;"></div>
<div style="left:1019.5px;top:605.6px;width:1.0px;height:13.67999999999995px;background:#dde2e0;"></div>
<div style="left:1093.5px;top:605.6px;width:1.0px;height:13.67999999999995px;background:#dde2e0;"></div>
<div style="left:63.35px;top:604.04px;height:18.4px;line-height:18.4px;font-size:9.2px;color:#333;white-space:nowrap;">OK</div>
<div style="left:924.98px;top:604.04px;height:18.4px;line-height:18.4px;font-size:9.2px;color:#333;white-space:nowrap;">$0.00</div>
<div style="left:37px;top:619.28px;width:1141px;height:13.67999999999995px;background:#e4ebe9;"></div>
<div style="left:102.5px;top:619.28px;width:1.0px;height:13.67999999999995px;background:#dde2e0;"></div>
<div style="left:181.5px;top:619.28px;width:1.0px;height:13.67999999999995px;background:#dde2e0;"></div>
<div style="left:250.5px;top:619.28px;width:1.0px;height:13.67999999999995px;background:#dde2e0;"></div>
<div style="left:359.5px;top:619.28px;width:1.0px;height:13.67999999999995px;background:#dde2e0;"></div>
<div style="left:470.5px;top:619.28px;width:1.0px;height:13.67999999999995px;background:#dde2e0;"></div>
<div style="left:590.5px;top:619.28px;width:1.0px;height:13.67999999999995px;background:#dde2e0;"></div>
<div style="left:734.5px;top:619.28px;width:1.0px;height:13.67999999999995px;background:#dde2e0;"></div>
<div style="left:811.5px;top:619.28px;width:1.0px;height:13.67999999999995px;background:#dde2e0;"></div>
<div style="left:878.5px;top:619.28px;width:1.0px;height:13.67999999999995px;background:#dde2e0;"></div>
<div style="left:949.5px;top:619.28px;width:1.0px;height:13.67999999999995px;background:#dde2e0;"></div>
<div style="left:1019.5px;top:619.28px;width:1.0px;height:13.67999999999995px;background:#dde2e0;"></div>
<div style="left:1093.5px;top:619.28px;width:1.0px;height:13.67999999999995px;background:#dde2e0;"></div>
<div style="left:63.35px;top:617.72px;height:18.4px;line-height:18.4px;font-size:9.2px;color:#333;white-space:nowrap;">OK</div>
<div style="left:924.98px;top:617.72px;height:18.4px;line-height:18.4px;font-size:9.2px;color:#333;white-space:nowrap;">$0.00</div>
<div style="left:37px;top:632.96px;width:1141px;height:13.67999999999995px;background:#ffffff;"></div>
<div style="left:102.5px;top:632.96px;width:1.0px;height:13.67999999999995px;background:#dde2e0;"></div>
<div style="left:181.5px;top:632.96px;width:1.0px;height:13.67999999999995px;background:#dde2e0;"></div>
<div style="left:250.5px;top:632.96px;width:1.0px;height:13.67999999999995px;background:#dde2e0;"></div>
<div style="left:359.5px;top:632.96px;width:1.0px;height:13.67999999999995px;background:#dde2e0;"></div>
<div style="left:470.5px;top:632.96px;width:1.0px;height:13.67999999999995px;background:#dde2e0;"></div>
<div style="left:590.5px;top:632.96px;width:1.0px;height:13.67999999999995px;background:#dde2e0;"></div>
<div style="left:734.5px;top:632.96px;width:1.0px;height:13.67999999999995px;background:#dde2e0;"></div>
<div style="left:811.5px;top:632.96px;width:1.0px;height:13.67999999999995px;background:#dde2e0;"></div>
<div style="left:878.5px;top:632.96px;width:1.0px;height:13.67999999999995px;background:#dde2e0;"></div>
<div style="left:949.5px;top:632.96px;width:1.0px;height:13.67999999999995px;background:#dde2e0;"></div>
<div style="left:1019.5px;top:632.96px;width:1.0px;height:13.67999999999995px;background:#dde2e0;"></div>
<div style="left:1093.5px;top:632.96px;width:1.0px;height:13.67999999999995px;background:#dde2e0;"></div>
<div style="left:63.35px;top:631.40px;height:18.4px;line-height:18.4px;font-size:9.2px;color:#333;white-space:nowrap;">OK</div>
<div style="left:924.98px;top:631.40px;height:18.4px;line-height:18.4px;font-size:9.2px;color:#333;white-space:nowrap;">$0.00</div>
<div style="left:470px;top:522.52px;width:122px;height:15.17999999999995px;background:transparent;border:1.7px solid #44695a;"></div>
<div style="left:588px;top:534.1999999999999px;width:5px;height:5.0px;background:#2c4a3e;border-radius:50%;"></div>
<div style="left:1178px;top:200px;width:22px;height:448px;background:#f3f4f5;"></div>
<div style="left:1178px;top:214px;width:1px;height:434px;background:#e2e4e6;"></div>
<svg style="left:1183px;top:205px;" width="10" height="7" viewBox="0 0 10 7"><path d="M5 0 L10 7 L0 7 Z" fill="#555"/></svg>
<div style="left:1184.5px;top:217px;width:7.0px;height:53.5px;background:#6a6a6a;border-radius:4px;"></div>
<svg style="left:1183px;top:638px;" width="11" height="8" viewBox="0 0 11 8"><path d="M0 0 L11 0 L5.5 8 Z" fill="#606060"/></svg>
<div style="left:0px;top:648px;width:1200px;height:32px;background:#eef0f3;"></div>
<svg style="left:22px;top:659px;" width="7" height="11" viewBox="0 0 7 11"><path d="M6 0.8 L1.3 5.5 L6 10.2" fill="none" stroke="#a0a0a0" stroke-width="1.2"/></svg>
<svg style="left:52px;top:659px;" width="7" height="11" viewBox="0 0 7 11"><path d="M1 0.8 L5.7 5.5 L1 10.2" fill="none" stroke="#444" stroke-width="1.3"/></svg>
<div style="left:105px;top:651px;width:162px;height:25px;background:#f8f7f4;border-radius:3px;box-shadow:0 1px 2px rgba(0,0,0,0.2);"></div>
<div style="left:112.00px;top:650.80px;height:26px;line-height:26px;font-size:13px;color:#222;white-space:nowrap;transform:scaleX(1.0415);transform-origin:left center;-webkit-text-stroke:0.35px #222;">Inventory - Stock Control</div>
<div style="left:112px;top:671.3px;width:149px;height:1.900000000000091px;background:#3a8559;"></div>
<div style="left:277px;top:654px;width:189px;height:23px;background:#b7a39b;border-radius:4px;"></div>
<div style="left:287.00px;top:653.30px;height:26px;line-height:26px;font-size:13px;color:#33261f;white-space:nowrap;-webkit-text-stroke:0.15px #33261f;">Inventory - Stock Track Sheet</div>
<div style="left:475px;top:654px;width:55px;height:23px;background:#b7a39b;border-radius:4px 0 0 4px;"></div>
<div style="left:485.00px;top:653.30px;height:26px;line-height:26px;font-size:13px;color:#33261f;white-space:nowrap;transform:scaleX(0.9580);transform-origin:left center;-webkit-text-stroke:0.15px #33261f;">Inventor</div>
<div style="left:539.8px;top:663px;width:2.400000000000091px;height:2.3999999999999773px;background:#333;border-radius:50%;"></div>
<div style="left:543.8px;top:663px;width:2.400000000000091px;height:2.3999999999999773px;background:#333;border-radius:50%;"></div>
<div style="left:547.8px;top:663px;width:2.400000000000091px;height:2.3999999999999773px;background:#333;border-radius:50%;"></div>
<svg style="left:568.5px;top:658.5px;" width="11" height="11" viewBox="0 0 11 11"><path d="M5.5 0 L5.5 11 M0 5.5 L11 5.5" stroke="#555" stroke-width="1.3"/></svg>
<div style="left:603.4px;top:658.6999999999999px;width:2.2000000000000455px;height:2.2000000000000455px;background:#444;border-radius:50%;"></div>
<div style="left:603.4px;top:663.1999999999999px;width:2.2000000000000455px;height:2.2000000000000455px;background:#444;border-radius:50%;"></div>
<div style="left:603.4px;top:667.6999999999999px;width:2.2000000000000455px;height:2.2000000000000455px;background:#444;border-radius:50%;"></div>
<div style="left:619px;top:656px;width:569px;height:16.5px;background:#f8f8f9;border-radius:8px;"></div>
<svg style="left:624px;top:660.5px;" width="7" height="8" viewBox="0 0 7 8"><path d="M7 0 L7 8 L0 4 Z" fill="#606060"/></svg>
<div style="left:636px;top:660.5px;width:436px;height:7.5px;background:#6e6e6e;border-radius:4px;"></div>
<svg style="left:1166px;top:659px;" width="7" height="10" viewBox="0 0 7 10"><path d="M0 0 L0 10 L7 5 Z" fill="#606060"/></svg>
<svg style="left:15px;top:13px;" width="17" height="16" viewBox="0 0 17 16"><rect x="4" y="0.5" width="12.5" height="15" rx="1.5" fill="#1e8a4c"/><rect x="4" y="0.5" width="12.5" height="5" rx="1" fill="#27a35f"/><rect x="4" y="10.5" width="12.5" height="5" rx="1" fill="#156b3a"/><rect x="0.5" y="3" width="9" height="10" rx="1.2" fill="#10703c"/><path d="M2.6 5 L7.4 11 M7.4 5 L2.6 11" stroke="#fff" stroke-width="1.6"/></svg>
<div style="left:92px;top:12px;width:42.5px;height:18.5px;background:#f7f8f9;border:1.6px solid #8c8c8c;border-radius:10px;"></div>
<svg style="left:95.5px;top:15px;" width="13" height="13" viewBox="0 0 13 13"><circle cx="6.5" cy="6.5" r="6.2" fill="#5c5c5c"/></svg>
<div style="left:113.50px;top:11.80px;height:21.0px;line-height:21.0px;font-size:10.5px;color:#666;white-space:nowrap;transform:scaleX(1.0136);transform-origin:left center;">Off</div>
<svg style="left:144.5px;top:13.5px;" width="16" height="15" viewBox="0 0 16 15"><path d="M0 1.5 Q0 0 1.5 0 L12.5 0 L16 3.5 L16 13.5 Q16 15 14.5 15 L1.5 15 Q0 15 0 13.5 Z" fill="#a34fb5"/><rect x="3.5" y="1.8" width="8.5" height="3.6" rx="0.6" fill="#f3c6f3"/><rect x="3" y="8.8" width="10" height="4.5" rx="0.6" fill="#f3c6f3"/></svg>
<svg style="left:171px;top:13px;" width="17" height="16" viewBox="0 0 17 16"><path d="M2.5 2 L2.5 7.5 L8 7.5" fill="none" stroke="#4a4a4a" stroke-width="1.6" stroke-linejoin="round" stroke-linecap="round"/><path d="M2.8 7.2 C5 3.5 11 2.5 13.8 6.5 C16 10 13 13.5 8 15.5" fill="none" stroke="#4a4a4a" stroke-width="1.6" stroke-linecap="round"/></svg>
<svg style="left:191px;top:18px;" width="7" height="5" viewBox="0 0 7 5"><path d="M0.8 0.8 L3.5 3.6 L6.2 0.8" fill="none" stroke="#444" stroke-width="1.4"/></svg>
<svg style="left:207px;top:13px;" width="17" height="16" viewBox="0 0 17 16"><path d="M14.5 2 L14.5 7.5 L9 7.5" fill="none" stroke="#b2b2b2" stroke-width="1.5" stroke-linejoin="round" stroke-linecap="round"/><path d="M14.2 7.2 C12 3.5 6 2.5 3.2 6.5 C1 10 4 13.5 9 15.5" fill="none" stroke="#b2b2b2" stroke-width="1.5" stroke-linecap="round"/></svg>
<svg style="left:227px;top:18px;" width="7" height="5" viewBox="0 0 7 5"><path d="M0.8 0.8 L3.5 3.6 L6.2 0.8" fill="none" stroke="#c0c0c0" stroke-width="1.3"/></svg>
<svg style="left:246px;top:16px;" width="9" height="9" viewBox="0 0 9 9"><path d="M1 1.5 L8 1.5" stroke="#333" stroke-width="1.3"/><path d="M1 4 L8 4 L4.5 8 Z" fill="#333"/></svg>
<svg style="left:546px;top:17px;" width="12" height="8" viewBox="0 0 12 8"><path d="M1 1.5 L6 6 L11 1.5" fill="none" stroke="#333" stroke-width="1.5"/></svg>
<svg style="left:600px;top:14px;" width="15" height="15" viewBox="0 0 15 15"><circle cx="9.5" cy="5.5" r="4.3" fill="none" stroke="#555" stroke-width="1.4"/><path d="M6.3 8.7 L1.2 13.8" stroke="#555" stroke-width="1.5" stroke-linecap="round"/></svg>
<svg style="left:1027px;top:8px;" width="26" height="26" viewBox="0 0 26 26"><circle cx="13" cy="13" r="12.5" fill="#f4dede"/><circle cx="13" cy="13" r="11.2" fill="#8a1822"/></svg>
<div style="left:1037.00px;top:12.80px;height:18px;line-height:18px;font-size:9px;color:#f2d4d6;white-space:nowrap;">Y</div>
<div style="left:1080px;top:20px;width:10px;height:1.3000000000000007px;background:#444;"></div>
<svg style="left:1123px;top:16px;" width="14" height="11" viewBox="0 0 14 11"><rect x="1" y="2.5" width="8.5" height="8" rx="2" fill="none" stroke="#444" stroke-width="1.4"/><path d="M3.5 1 L10 1 Q12.5 1 12.5 3.5 L12.5 8" fill="none" stroke="#444" stroke-width="1.4"/></svg>
<svg style="left:1169px;top:16px;" width="12" height="11" viewBox="0 0 12 11"><path d="M1 0.5 L11 10.5 M11 0.5 L1 10.5" stroke="#444" stroke-width="1.4"/></svg>
<div style="left:1029.5px;top:46.5px;width:82.5px;height:21.5px;background:#ffffff;border:1px solid #d4d6d9;border-radius:4px;"></div>
<svg style="left:1033px;top:51px;" width="12" height="11" viewBox="0 0 12 11"><path d="M1 1 L11 1 L11 7.5 L4.5 7.5 L1.5 10.5 L1.5 7.5 L1 7.5 Z" fill="none" stroke="#444" stroke-width="1.2" stroke-linejoin="round"/></svg>
<div style="left:1048.50px;top:46.80px;height:24px;line-height:24px;font-size:12px;color:#333;white-space:nowrap;">Comments</div>
<div style="left:1120.5px;top:46.5px;width:65.5px;height:21.5px;background:#1f7a45;border-radius:4px;"></div>
<svg style="left:1125px;top:51px;" width="13" height="12" viewBox="0 0 13 12"><path d="M2 5 L2 11 L11 11 L11 8" fill="none" stroke="#fff" stroke-width="1.2"/><path d="M4.5 8.5 C5 5 7.5 4 10 4 L10 2 L12.5 5 L10 8 L10 6 C8 6 6 6.5 4.5 8.5 Z" fill="none" stroke="#fff" stroke-width="1.1" stroke-linejoin="round"/></svg>
<div style="left:1139.50px;top:46.80px;height:24px;line-height:24px;font-size:12px;color:#ffffff;white-space:nowrap;transform:scaleX(0.9681);transform-origin:left center;-webkit-text-stroke:0.35px #fff;">Share</div>
<svg style="left:1174px;top:56px;" width="7" height="5" viewBox="0 0 7 5"><path d="M0.8 0.8 L3.5 3.6 L6.2 0.8" fill="none" stroke="#fff" stroke-width="1.3"/></svg>
<div style="left:33.30px;top:145.10px;height:21.0px;line-height:21.0px;font-size:10.5px;color:#5a5a5a;white-space:nowrap;transform:scaleX(0.9345);transform-origin:left center;">Clipboard</div>
<svg style="left:100.5px;top:152.3px;" width="8" height="7" viewBox="0 0 8 7"><path d="M0.6 6.4 L0.6 0.6 L7.4 0.6 L7.4 2" fill="none" stroke="#555" stroke-width="1"/><path d="M2.5 2.5 L7 6.5 M4 6.6 L7.3 6.6 L7.3 3.4" fill="none" stroke="#333" stroke-width="1.2"/></svg>
<div style="left:111.5px;top:78px;width:1.0px;height:82px;background:#e3e3e3;"></div>
<div style="left:203.70px;top:145.10px;height:21.0px;line-height:21.0px;font-size:10.5px;color:#5a5a5a;white-space:nowrap;transform:scaleX(0.9281);transform-origin:left center;">Font</div>
<svg style="left:319.3px;top:152.3px;" width="8" height="7" viewBox="0 0 8 7"><path d="M0.6 6.4 L0.6 0.6 L7.4 0.6 L7.4 2" fill="none" stroke="#555" stroke-width="1"/><path d="M2.5 2.5 L7 6.5 M4 6.6 L7.3 6.6 L7.3 3.4" fill="none" stroke="#333" stroke-width="1.2"/></svg>
<div style="left:329.5px;top:78px;width:1.0px;height:82px;background:#e3e3e3;"></div>
<svg style="left:27px;top:79px;" width="29" height="30" viewBox="0 0 29 30"><path d="M7 3.5 L3 3.5 Q2 3.5 2 4.5 L2 24.5 Q2 25.5 3 25.5 L13.5 25.5" fill="none" stroke="#e3b25f" stroke-width="1.6"/><path d="M15 3.5 L20 3.5 Q21 3.5 21 4.5 L21 11" fill="none" stroke="#e3b25f" stroke-width="1.6"/><path d="M6 6.5 L6 3.5 Q6 2.5 7.5 2.5 L9 2.5 Q11 0 13 2.5 L14.5 2.5 Q16 2.5 16 3.5 L16 6.5 Z" fill="#fff" stroke="#6b6b6b" stroke-width="1.2"/><rect x="14" y="11.5" width="12.5" height="17" fill="#fff" stroke="#5e5e5e" stroke-width="1.4"/></svg>
<div style="left:26.00px;top:108.40px;height:22px;line-height:22px;font-size:11px;color:#3c3c3c;white-space:nowrap;transform:scaleX(0.9065);transform-origin:left center;">Paste</div>
<svg style="left:35.2px;top:130.5px;" width="7" height="5" viewBox="0 0 7 5"><path d="M0.8 0.9 L3.5 4.1 L6.2 0.9" fill="none" stroke="#444" stroke-width="1.2"/></svg>
<svg style="left:65px;top:79px;" width="12" height="16" viewBox="0 0 12 16"><path d="M3 0.5 L8 9.5 M9 0.5 L4 9.5" stroke="#4a4a4a" stroke-width="1.3"/><circle cx="3" cy="12" r="2.3" fill="none" stroke="#3f8fd0" stroke-width="1.6"/><circle cx="9" cy="12" r="2.3" fill="none" stroke="#3f8fd0" stroke-width="1.6"/></svg>
<svg style="left:62.5px;top:102.5px;" width="17" height="17" viewBox="0 0 17 17"><path d="M8 2 L4.5 1 Q1 1 1 4.5 L1 12 Q1 14 3 14" fill="none" stroke="#555" stroke-width="1.2"/><rect x="1" y="1" width="8" height="12.5" rx="1.5" fill="#fff" stroke="#555" stroke-width="1.2"/><path d="M6 5 L12 5 L15.5 8.5 L15.5 16 L6 16 Z" fill="#fff" stroke="#555" stroke-width="1.2" stroke-linejoin="round"/><path d="M9 11.5 L12.5 11.5 M9 13.5 L12.5 13.5" stroke="#888" stroke-width="0.9"/></svg>
<svg style="left:89.5px;top:108.1px;" width="7" height="5" viewBox="0 0 7 5"><path d="M0.8 0.9 L3.5 4.1 L6.2 0.9" fill="none" stroke="#444" stroke-width="1.2"/></svg>
<svg style="left:63.5px;top:127px;" width="16" height="15" viewBox="0 0 16 15"><path d="M10 1.5 L14.5 6 L11.5 8 L8 4.5 Z" fill="#fff" stroke="#555" stroke-width="1.2" stroke-linejoin="round"/><path d="M8.5 5 L11 7.5 L9 9.5 L6.5 7 Z" fill="#777"/><path d="M6.5 7 L9 9.5 L5 14 L0.8 10.5 Z" fill="#f0a346" stroke="#d98a2a" stroke-width="0.8"/><path d="M2.5 11.5 L4.5 9.5 M4 13 L6 11" stroke="#fff3df" stroke-width="0.8"/></svg>
<div style="left:119.3px;top:83.4px;width:112.3px;height:21.599999999999994px;background:#fff;border:1px solid #c9c9c9;border-radius:3.5px;"></div>
<div style="left:121.80px;top:83.80px;height:22px;line-height:22px;font-size:11px;color:#3a3a3a;white-space:nowrap;transform:scaleX(1.0906);transform-origin:left center;">Arial</div>
<svg style="left:223.7px;top:92.0px;" width="6" height="5" viewBox="0 0 6 5"><path d="M0.8 0.9 L3.0 4.1 L5.2 0.9" fill="none" stroke="#444" stroke-width="1.3"/></svg>
<div style="left:234.6px;top:83.4px;width:39.79999999999998px;height:21.599999999999994px;background:#fff;border:1px solid #c9c9c9;border-radius:3.5px;"></div>
<div style="left:237.50px;top:83.80px;height:22px;line-height:22px;font-size:11px;color:#3a3a3a;white-space:nowrap;transform:scaleX(0.9633);transform-origin:left center;">11</div>
<svg style="left:265.5px;top:92.0px;" width="6" height="5" viewBox="0 0 6 5"><path d="M0.8 0.9 L3.0 4.1 L5.2 0.9" fill="none" stroke="#444" stroke-width="1.3"/></svg>
<div style="left:281.00px;top:78.90px;height:30px;line-height:30px;font-size:15px;color:#444;white-space:nowrap;transform:scaleX(1.0994);transform-origin:left center;">A</div>
<svg style="left:290.5px;top:87.5px;" width="6" height="4" viewBox="0 0 6 4"><path d="M0.6 3.4 L3 0.8 L5.4 3.4" fill="none" stroke="#444" stroke-width="1"/></svg>
<div style="left:306.50px;top:81.30px;height:26px;line-height:26px;font-size:13px;color:#444;white-space:nowrap;transform:scaleX(1.0956);transform-origin:left center;">A</div>
<svg style="left:314.5px;top:88px;" width="6" height="4" viewBox="0 0 6 4"><path d="M0.6 0.8 L3 3.2 L5.4 0.8" fill="none" stroke="#444" stroke-width="1"/></svg>
<div style="left:127.60px;top:112.00px;height:23.0px;line-height:23.0px;font-size:11.5px;color:#333;white-space:nowrap;font-weight:bold;transform:scaleX(0.8428);transform-origin:left center;">B</div>
<svg style="left:150.5px;top:117.5px;" width="9" height="12" viewBox="0 0 9 12"><path d="M6.5 0.5 L2.5 11.5" stroke="#555" stroke-width="1.3"/></svg>
<div style="left:174.60px;top:111.90px;height:22px;line-height:22px;font-size:11px;color:#444;white-space:nowrap;transform:scaleX(1.0700);transform-origin:left center;">U</div>
<div style="left:174.5px;top:128.5px;width:9.0px;height:1.0px;background:#555;"></div>
<svg style="left:193.6px;top:121.0px;" width="6" height="5" viewBox="0 0 6 5"><path d="M0.8 0.9 L3.0 4.1 L5.2 0.9" fill="none" stroke="#444" stroke-width="1.2"/></svg>
<div style="left:205.5px;top:113px;width:1.0px;height:23px;background:#e3e3e3;"></div>
<svg style="left:211.5px;top:115.5px;" width="16" height="16" viewBox="0 0 16 16"><rect x="1" y="1" width="14" height="14" fill="none" stroke="#aaa" stroke-width="1"/><path d="M8 1 L8 15 M1 8 L15 8" stroke="#777" stroke-width="1.1"/><path d="M1 15 L15 15" stroke="#555" stroke-width="1.6"/></svg>
<svg style="left:234.5px;top:121.0px;" width="6" height="5" viewBox="0 0 6 5"><path d="M0.8 0.9 L3.0 4.1 L5.2 0.9" fill="none" stroke="#444" stroke-width="1.2"/></svg>
<div style="left:246.8px;top:113px;width:1.0px;height:23px;background:#e3e3e3;"></div>
<svg style="left:252px;top:115px;" width="17" height="17" viewBox="0 0 17 17"><path d="M4 6 L9 1.5 L14 6.5 L9.5 11 Z" fill="#fff" stroke="#555" stroke-width="1.2" stroke-linejoin="round"/><path d="M11 3.5 Q14.5 3 14.5 7.5" fill="none" stroke="#3b6fb0" stroke-width="1.3"/><rect x="0.5" y="13" width="16" height="3.6" fill="#f2ee30"/></svg>
<svg style="left:274.7px;top:121.0px;" width="6" height="5" viewBox="0 0 6 5"><path d="M0.8 0.9 L3.0 4.1 L5.2 0.9" fill="none" stroke="#444" stroke-width="1.2"/></svg>
<div style="left:294.60px;top:109.90px;height:24px;line-height:24px;font-size:12px;color:#444;white-space:nowrap;transform:scaleX(1.0619);transform-origin:left center;">A</div>
<div style="left:290px;top:128.2px;width:15.600000000000023px;height:3.4000000000000057px;background:#d4202a;"></div>
<svg style="left:312.0px;top:121.0px;" width="6" height="5" viewBox="0 0 6 5"><path d="M0.8 0.9 L3.0 4.1 L5.2 0.9" fill="none" stroke="#444" stroke-width="1.2"/></svg>
<svg style="left:342.5px;top:84px;" width="14" height="14" viewBox="0 0 14 14"><path d="M0.25 3 L13.25 3" stroke="#4a4a4a" stroke-width="1.45"/><path d="M2.25 6.8 L11.25 6.8" stroke="#4a4a4a" stroke-width="1.45"/><path d="M0.25 10.6 L13.25 10.6" stroke="#4a4a4a" stroke-width="1.45"/></svg>
<div style="left:362px;top:83px;width:23.5px;height:22.200000000000003px;background:#f3f3f3;border:1px solid #b9b9b9;border-radius:4px;"></div>
<svg style="left:367px;top:86px;" width="14" height="14" viewBox="0 0 14 14"><path d="M0.25 3.2 L13.75 3.2" stroke="#4a4a4a" stroke-width="1.45"/><path d="M2.5 7 L11.5 7" stroke="#4a4a4a" stroke-width="1.45"/><path d="M0.25 10.8 L13.75 10.8" stroke="#4a4a4a" stroke-width="1.45"/></svg>
<svg style="left:391px;top:90px;" width="14" height="14" viewBox="0 0 14 14"><path d="M0.25 3 L13.25 3" stroke="#4a4a4a" stroke-width="1.45"/><path d="M2.25 6.8 L11.25 6.8" stroke="#4a4a4a" stroke-width="1.45"/><path d="M0.25 10.6 L13.25 10.6" stroke="#4a4a4a" stroke-width="1.45"/></svg>
<svg style="left:413px;top:85px;" width="19" height="17" viewBox="0 0 19 17"><text x="3" y="11" font-size="8.5" font-family="Liberation Sans" fill="#555" transform="rotate(-45 7 8)">ab</text><path d="M5 15.5 L15.5 5" stroke="#2aa198" stroke-width="1.2"/><path d="M12.5 4.5 L16 4 L15.5 7.5 Z" fill="#2aa198"/></svg>
<svg style="left:434.8px;top:91.7px;" width="6" height="5" viewBox="0 0 6 5"><path d="M0.8 0.9 L3.0 4.1 L5.2 0.9" fill="none" stroke="#444" stroke-width="1.3"/></svg>
<div style="left:338px;top:112.4px;width:22.600000000000023px;height:22.900000000000006px;background:#f3f3f3;border:1px solid #b9b9b9;border-radius:4px;"></div>
<svg style="left:342px;top:114px;" width="14" height="18" viewBox="0 0 14 18"><path d="M0 3.6 L14 3.6" stroke="#4a4a4a" stroke-width="1.45"/><path d="M0 7.5 L10 7.5" stroke="#4a4a4a" stroke-width="1.45"/><path d="M0 11.5 L14 11.5" stroke="#4a4a4a" stroke-width="1.45"/><path d="M0 15.4 L10 15.4" stroke="#4a4a4a" stroke-width="1.45"/></svg>
<svg style="left:367px;top:114px;" width="14" height="18" viewBox="0 0 14 18"><path d="M0.25 3.6 L13.25 3.6" stroke="#4a4a4a" stroke-width="1.45"/><path d="M2.25 7.5 L11.25 7.5" stroke="#4a4a4a" stroke-width="1.45"/><path d="M0.25 11.5 L13.25 11.5" stroke="#4a4a4a" stroke-width="1.45"/><path d="M2.25 15.4 L11.25 15.4" stroke="#4a4a4a" stroke-width="1.45"/></svg>
<svg style="left:391px;top:114px;" width="14" height="18" viewBox="0 0 14 18"><path d="M0.5 3.6 L14 3.6" stroke="#4a4a4a" stroke-width="1.45"/><path d="M5 7.5 L14 7.5" stroke="#4a4a4a" stroke-width="1.45"/><path d="M0.5 11.5 L14 11.5" stroke="#4a4a4a" stroke-width="1.45"/><path d="M5 15.4 L14 15.4" stroke="#4a4a4a" stroke-width="1.45"/></svg>
<svg style="left:415px;top:114px;" width="14" height="18" viewBox="0 0 14 18"><path d="M0 3.6 L13.5 3.6" stroke="#b86a6a" stroke-width="1.2"/><path d="M6 7.5 L13.5 7.5 M6 11.5 L13.5 11.5 M0 15.4 L13.5 15.4" stroke="#555" stroke-width="1.2"/><path d="M5 9.5 L1 9.5" stroke="#2a9d9a" stroke-width="1.2"/><path d="M3 7.5 L0.5 9.5 L3 11.5 Z" fill="#2a9d9a"/></svg>
<svg style="left:440px;top:114px;" width="14" height="18" viewBox="0 0 14 18"><path d="M0 3.6 L13.5 3.6" stroke="#555" stroke-width="1.2"/><path d="M6 7.5 L13.5 7.5 M6 11.5 L13.5 11.5 M0 15.4 L13.5 15.4" stroke="#555" stroke-width="1.2"/><path d="M0 9.5 L4.5 9.5" stroke="#2a9d9a" stroke-width="1.2"/><path d="M3 7.5 L5.5 9.5 L3 11.5 Z" fill="#2a9d9a"/></svg>
<div style="left:463.2px;top:80px;width:1.0px;height:60px;background:#e3e3e3;"></div>
<div style="left:469px;top:82.8px;width:23.30000000000001px;height:22.400000000000006px;background:#f3f3f3;border:1px solid #b9b9b9;border-radius:4px;"></div>
<svg style="left:472px;top:84px;" width="18" height="20" viewBox="0 0 18 20"><text x="2.5" y="9" font-size="8.5" font-family="Liberation Sans" fill="#555">ab</text><text x="2.5" y="17" font-size="8.5" font-family="Liberation Sans" fill="#555">c</text><path d="M14 9 L14 13 Q14 15.5 11 15.5 L8.5 15.5" fill="none" stroke="#2c7fd1" stroke-width="1.3"/><path d="M10 13.5 L8 15.5 L10 17.5" fill="none" stroke="#2c7fd1" stroke-width="1.2"/></svg>
<svg style="left:472.5px;top:116px;" width="15" height="15" viewBox="0 0 15 15"><rect x="0.6" y="0.6" width="13.8" height="13.8" fill="none" stroke="#b0b0b0" stroke-width="1.1"/><path d="M0.6 4.5 L14.4 4.5 M0.6 10.5 L14.4 10.5" stroke="#c5c5c5" stroke-width="0.9"/><path d="M3.5 7.5 L11.5 7.5" stroke="#aaa" stroke-width="0.9"/><path d="M5 6 L3.3 7.5 L5 9 M10 6 L11.7 7.5 L10 9" fill="none" stroke="#aaa" stroke-width="0.9"/></svg>
<svg style="left:499.2px;top:121.0px;" width="6" height="5" viewBox="0 0 6 5"><path d="M0.8 0.9 L3.0 4.1 L5.2 0.9" fill="none" stroke="#c4c4c4" stroke-width="1.1"/></svg>
<div style="left:395.30px;top:145.10px;height:21.0px;line-height:21.0px;font-size:10.5px;color:#5a5a5a;white-space:nowrap;transform:scaleX(0.9637);transform-origin:left center;">Alignment</div>
<svg style="left:509.3px;top:152.3px;" width="8" height="7" viewBox="0 0 8 7"><path d="M0.6 6.4 L0.6 0.6 L7.4 0.6 L7.4 2" fill="none" stroke="#555" stroke-width="1"/><path d="M2.5 2.5 L7 6.5 M4 6.6 L7.3 6.6 L7.3 3.4" fill="none" stroke="#333" stroke-width="1.2"/></svg>
<div style="left:519.5px;top:78px;width:1.0px;height:82px;background:#e3e3e3;"></div>
<div style="left:528.6px;top:76px;width:84.39999999999998px;height:21.200000000000003px;background:#fff;border:1px solid #c9c9c9;border-radius:4px;"></div>
<div style="left:531.50px;top:76.40px;height:22px;line-height:22px;font-size:11px;color:#3a3a3a;white-space:nowrap;transform:scaleX(0.9418);transform-origin:left center;">Text</div>
<svg style="left:605.0px;top:84.7px;" width="6" height="5" viewBox="0 0 6 5"><path d="M0.8 0.9 L3.0 4.1 L5.2 0.9" fill="none" stroke="#444" stroke-width="1.3"/></svg>
<div style="left:535.30px;top:96.60px;height:29.0px;line-height:29.0px;font-size:14.5px;color:#3a3a3a;white-space:nowrap;transform:scaleX(0.9920);transform-origin:left center;">$</div>
<svg style="left:554.7px;top:108.3px;" width="5" height="5" viewBox="0 0 5 5"><path d="M0.8 0.9 L2.5 4.1 L4.2 0.9" fill="none" stroke="#444" stroke-width="1.2"/></svg>
<div style="left:570.80px;top:96.10px;height:30px;line-height:30px;font-size:15px;color:#3a3a3a;white-space:nowrap;transform:scaleX(1.0122);transform-origin:left center;">%</div>
<svg style="left:598px;top:105px;" width="9" height="13" viewBox="0 0 9 13"><path d="M5 1 Q8 1 8 4 Q8 9 2.5 12 L1.8 11 Q5 8.5 5 6.5 Q2.5 6.5 2.5 3.8 Q2.5 1 5 1 Z" fill="#333"/></svg>
<svg style="left:532px;top:127px;" width="16" height="16" viewBox="0 0 16 16"><text x="-0.5" y="15" font-size="9.5" font-family="Liberation Sans" fill="#555" textLength="15">.00</text><text x="9.5" y="8" font-size="9.5" font-family="Liberation Sans" fill="#555">0</text><path d="M8 4.3 L2 4.3" stroke="#2a9d9a" stroke-width="1.3"/><path d="M4 2 L1 4.3 L4 6.6" fill="none" stroke="#2a9d9a" stroke-width="1.2"/></svg>
<svg style="left:556px;top:127px;" width="16" height="16" viewBox="0 0 16 16"><text x="5" y="8" font-size="9.5" font-family="Liberation Sans" fill="#555">00</text><text x="9.5" y="15" font-size="9.5" font-family="Liberation Sans" fill="#555">0</text><path d="M0.5 11.3 L8 11.3" stroke="#2a9d9a" stroke-width="1.3"/><path d="M5.5 9 L8.5 11.3 L5.5 13.6" fill="none" stroke="#2a9d9a" stroke-width="1.2"/></svg>
<div style="left:545.20px;top:145.10px;height:21.0px;line-height:21.0px;font-size:10.5px;color:#5a5a5a;white-space:nowrap;transform:scaleX(0.9238);transform-origin:left center;">Number</div>
<svg style="left:609.6px;top:152.3px;" width="8" height="7" viewBox="0 0 8 7"><path d="M0.6 6.4 L0.6 0.6 L7.4 0.6 L7.4 2" fill="none" stroke="#555" stroke-width="1"/><path d="M2.5 2.5 L7 6.5 M4 6.6 L7.3 6.6 L7.3 3.4" fill="none" stroke="#333" stroke-width="1.2"/></svg>
<div style="left:619px;top:78px;width:1px;height:82px;background:#e3e3e3;"></div>
<svg style="left:631.5px;top:79.3px;" width="16" height="14.5" viewBox="0 0 16 14.5"><rect x="0.7" y="0.7" width="14.6" height="13.1" fill="#fbe3e3" stroke="#d9474f" stroke-width="1.3"/><path d="M5.5 0.7 L5.5 13.8 M10.5 0.7 L10.5 13.8 M0.7 5 L15.3 5 M0.7 9.4 L15.3 9.4" stroke="#d9474f" stroke-width="1.1"/><rect x="6" y="5.5" width="4" height="3.5" fill="#fff"/></svg>
<div style="left:650.40px;top:76.00px;height:23.0px;line-height:23.0px;font-size:11.5px;color:#3c3c3c;white-space:nowrap;transform:scaleX(0.9853);transform-origin:left center;">Conditional Formatting</div>
<svg style="left:769.0px;top:84.1px;" width="6" height="5" viewBox="0 0 6 5"><path d="M0.8 0.9 L3.0 4.1 L5.2 0.9" fill="none" stroke="#444" stroke-width="1.2"/></svg>
<svg style="left:631.5px;top:104px;" width="16" height="14.5" viewBox="0 0 16 14.5"><rect x="0.7" y="0.7" width="14.6" height="13.1" fill="#fff" stroke="#555" stroke-width="1.2" stroke-dasharray="2 1"/><path d="M0.7 5 L15.3 5 M5.5 0.7 L5.5 13.8" stroke="#7a9cc6" stroke-width="1"/><path d="M3 13.5 L14.5 3 L15.3 7 L8 13.8 Z" fill="#3d8bd0"/><path d="M13 2 L15 4" stroke="#555" stroke-width="1.2"/></svg>
<div style="left:650.40px;top:99.80px;height:23.0px;line-height:23.0px;font-size:11.5px;color:#3c3c3c;white-space:nowrap;transform:scaleX(0.9435);transform-origin:left center;">Format as Table</div>
<svg style="left:731.4px;top:108.2px;" width="6" height="5" viewBox="0 0 6 5"><path d="M0.8 0.9 L3.0 4.1 L5.2 0.9" fill="none" stroke="#444" stroke-width="1.2"/></svg>
<svg style="left:631.5px;top:128.2px;" width="16" height="14.5" viewBox="0 0 16 14.5"><rect x="0.7" y="0.7" width="14.6" height="13.1" fill="#cfe3f5" stroke="#555" stroke-width="1.2" stroke-dasharray="2 1"/><path d="M2 13 L14.5 2" stroke="#2f7fc6" stroke-width="2.5"/><path d="M12 1.2 L15.2 4" stroke="#555" stroke-width="1.3"/></svg>
<div style="left:650.40px;top:124.10px;height:23.0px;line-height:23.0px;font-size:11.5px;color:#3c3c3c;white-space:nowrap;transform:scaleX(0.9020);transform-origin:left center;">Cell Styles</div>
<svg style="left:703.0px;top:132.4px;" width="6" height="5" viewBox="0 0 6 5"><path d="M0.8 0.9 L3.0 4.1 L5.2 0.9" fill="none" stroke="#444" stroke-width="1.2"/></svg>
<div style="left:693.80px;top:145.60px;height:21.0px;line-height:21.0px;font-size:10.5px;color:#5a5a5a;white-space:nowrap;transform:scaleX(0.8219);transform-origin:left center;">Styles</div>
<div style="left:791.3px;top:78px;width:1.0px;height:82px;background:#e3e3e3;"></div>
<svg style="left:802.8px;top:79.8px;" width="16" height="14" viewBox="0 0 16 14"><rect x="0.7" y="0.7" width="14.6" height="12.6" rx="1" fill="#dcebf8" stroke="#555" stroke-width="1.2"/><path d="M0.7 4.7 L15.3 4.7 M0.7 9 L15.3 9 M5.3 0.7 L5.3 13.3 M10.6 0.7 L10.6 13.3" stroke="#3d8bd0" stroke-width="1"/><path d="M2 6.8 L7 6.8" stroke="#3d8bd0" stroke-width="1.5"/><path d="M4.5 4.5 L2 6.8 L4.5 9" fill="none" stroke="#3d8bd0" stroke-width="1.2"/></svg>
<div style="left:822.50px;top:75.90px;height:23.0px;line-height:23.0px;font-size:11.5px;color:#3c3c3c;white-space:nowrap;transform:scaleX(0.9214);transform-origin:left center;">Insert</div>
<svg style="left:866.0px;top:84.4px;" width="6" height="5" viewBox="0 0 6 5"><path d="M0.8 0.9 L3.0 4.1 L5.2 0.9" fill="none" stroke="#444" stroke-width="1.2"/></svg>
<svg style="left:802.8px;top:104px;" width="16" height="14" viewBox="0 0 16 14"><rect x="0.7" y="0.7" width="11" height="12.6" rx="1" fill="#dcebf8" stroke="#555" stroke-width="1.2" stroke-dasharray="3 1.2"/><path d="M0.7 4.7 L11 4.7 M0.7 9 L11 9 M5.3 0.7 L5.3 13.3" stroke="#3d8bd0" stroke-width="1"/><path d="M11 4 L15.3 8.5 M15.3 4 L11 8.5" stroke="#d93535" stroke-width="1.2"/></svg>
<div style="left:822.50px;top:100.00px;height:23.0px;line-height:23.0px;font-size:11.5px;color:#3c3c3c;white-space:nowrap;transform:scaleX(0.9175);transform-origin:left center;">Delete</div>
<svg style="left:870.0px;top:108.5px;" width="6" height="5" viewBox="0 0 6 5"><path d="M0.8 0.9 L3.0 4.1 L5.2 0.9" fill="none" stroke="#444" stroke-width="1.2"/></svg>
<svg style="left:802.8px;top:128.2px;" width="16" height="14" viewBox="0 0 16 14"><rect x="0.7" y="0.7" width="14.6" height="12.6" rx="1" fill="#dcebf8" stroke="#555" stroke-width="1.2"/><path d="M0.7 4.7 L15.3 4.7 M0.7 9 L15.3 9 M5.3 0.7 L5.3 13.3 M10.6 0.7 L10.6 13.3" stroke="#3d8bd0" stroke-width="1"/><rect x="5.3" y="4.7" width="5.3" height="4.3" fill="#3d8bd0"/></svg>
<div style="left:822.50px;top:124.10px;height:23.0px;line-height:23.0px;font-size:11.5px;color:#3c3c3c;white-space:nowrap;transform:scaleX(0.9610);transform-origin:left center;">Format</div>
<svg style="left:861.4px;top:132.3px;" width="6" height="5" viewBox="0 0 6 5"><path d="M0.8 0.9 L3.0 4.1 L5.2 0.9" fill="none" stroke="#444" stroke-width="1.2"/></svg>
<div style="left:831.00px;top:145.60px;height:21.0px;line-height:21.0px;font-size:10.5px;color:#5a5a5a;white-space:nowrap;transform:scaleX(0.8569);transform-origin:left center;">Cells</div>
<div style="left:890.8px;top:78px;width:1.0px;height:82px;background:#e3e3e3;"></div>
<svg style="left:903.5px;top:79.5px;" width="13" height="14" viewBox="0 0 13 14"><path d="M12 3 L12 1 L1 1 L6.5 7 L1 13 L12 13 L12 11" fill="none" stroke="#444" stroke-width="1.3" stroke-linejoin="miter"/></svg>
<svg style="left:928.8px;top:84.2px;" width="6" height="5" viewBox="0 0 6 5"><path d="M0.8 0.9 L3.0 4.1 L5.2 0.9" fill="none" stroke="#444" stroke-width="1.3"/></svg>
<svg style="left:902px;top:104px;" width="16" height="14" viewBox="0 0 16 14"><rect x="0.7" y="0.7" width="14.6" height="12.6" rx="1" fill="#fff" stroke="#555" stroke-width="1.3"/><path d="M0.7 3.8 L15.3 3.8" stroke="#555" stroke-width="1.2"/><rect x="1.5" y="4.5" width="13" height="8" fill="#dcebf8"/><path d="M8 5.5 L8 11" stroke="#3d8bd0" stroke-width="1.2"/><path d="M5.5 8.5 L8 11 L10.5 8.5" fill="none" stroke="#3d8bd0" stroke-width="1.2"/></svg>
<svg style="left:922.5px;top:108.5px;" width="6" height="5" viewBox="0 0 6 5"><path d="M0.8 0.9 L3.0 4.1 L5.2 0.9" fill="none" stroke="#444" stroke-width="1.3"/></svg>
<svg style="left:902.5px;top:127.8px;" width="15" height="15" viewBox="0 0 15 15"><path d="M1 9.5 L9 1.5 L14 6.5 L6 14.5 L4 14.5 Z" fill="#f3d3f3" stroke="#b54fc4" stroke-width="1.3" stroke-linejoin="round"/><path d="M4 6.5 L9 11.5" stroke="#b54fc4" stroke-width="1.3"/></svg>
<svg style="left:922.5px;top:132.5px;" width="6" height="5" viewBox="0 0 6 5"><path d="M0.8 0.9 L3.0 4.1 L5.2 0.9" fill="none" stroke="#444" stroke-width="1.3"/></svg>
<div style="left:950.50px;top:72.90px;height:27.0px;line-height:27.0px;font-size:13.5px;color:#4a9fd8;white-space:nowrap;">A</div>
<div style="left:951.00px;top:86.20px;height:27.0px;line-height:27.0px;font-size:13.5px;color:#4a4a4a;white-space:nowrap;transform:scaleX(1.0429);transform-origin:left center;">Z</div>
<svg style="left:961px;top:85.5px;" width="17" height="16" viewBox="0 0 17 16"><path d="M1 1 L16 1 L10 8.5 L10 14.5 L7 14.5 L7 8.5 Z" fill="none" stroke="#555" stroke-width="1.3" stroke-linejoin="round"/></svg>
<div style="left:947.60px;top:106.40px;height:23.0px;line-height:23.0px;font-size:11.5px;color:#3c3c3c;white-space:nowrap;transform:scaleX(1.0138);transform-origin:left center;">Sort &amp;</div>
<div style="left:947.60px;top:121.60px;height:23.0px;line-height:23.0px;font-size:11.5px;color:#3c3c3c;white-space:nowrap;transform:scaleX(0.8843);transform-origin:left center;">Filter</div>
<svg style="left:975.0px;top:129.3px;" width="5" height="5" viewBox="0 0 5 5"><path d="M0.8 0.9 L2.5 4.1 L4.2 0.9" fill="none" stroke="#444" stroke-width="1.1"/></svg>
<svg style="left:992px;top:78px;" width="30" height="30" viewBox="0 0 30 30"><circle cx="18.7" cy="11.3" r="9.7" fill="none" stroke="#555" stroke-width="1.4"/><path d="M11.8 18.2 L2 28" stroke="#555" stroke-width="1.5" stroke-linecap="round"/></svg>
<div style="left:992.00px;top:106.40px;height:23.0px;line-height:23.0px;font-size:11.5px;color:#3c3c3c;white-space:nowrap;transform:scaleX(0.9628);transform-origin:left center;">Find &amp;</div>
<div style="left:988.80px;top:121.60px;height:23.0px;line-height:23.0px;font-size:11.5px;color:#3c3c3c;white-space:nowrap;transform:scaleX(0.8760);transform-origin:left center;">Select</div>
<svg style="left:1020.1px;top:129.3px;" width="5" height="5" viewBox="0 0 5 5"><path d="M0.8 0.9 L2.5 4.1 L4.2 0.9" fill="none" stroke="#444" stroke-width="1.1"/></svg>
<div style="left:948.30px;top:145.60px;height:21.0px;line-height:21.0px;font-size:10.5px;color:#5a5a5a;white-space:nowrap;transform:scaleX(0.9344);transform-origin:left center;">Editing</div>
<div style="left:1037px;top:78px;width:1px;height:82px;background:#e3e3e3;"></div>
<svg style="left:1053px;top:79px;" width="27" height="27" viewBox="0 0 27 27"><rect x="1" y="1" width="25" height="25" fill="#f9d9cc" stroke="#e58d70" stroke-width="1.4"/><rect x="4" y="4" width="8" height="8" fill="#fff" stroke="#eba58d" stroke-width="1"/><rect x="15" y="4" width="8" height="8" fill="#fff" stroke="#eba58d" stroke-width="1"/><rect x="4" y="15" width="8" height="8" fill="#fff" stroke="#eba58d" stroke-width="1"/><rect x="15" y="15" width="8" height="8" fill="#fff" stroke="#eba58d" stroke-width="1"/></svg>
<div style="left:1048.00px;top:106.40px;height:23.0px;line-height:23.0px;font-size:11.5px;color:#3c3c3c;white-space:nowrap;transform:scaleX(0.9873);transform-origin:left center;">Add-ins</div>
<div style="left:1049.30px;top:145.60px;height:21.0px;line-height:21.0px;font-size:10.5px;color:#5a5a5a;white-space:nowrap;transform:scaleX(0.9269);transform-origin:left center;">Add-ins</div>
<div style="left:1096.2px;top:78px;width:1.0px;height:82px;background:#e3e3e3;"></div>
<svg style="left:1112px;top:79px;" width="27" height="27" viewBox="0 0 27 27"><rect x="1" y="1" width="25" height="25" fill="#fff" stroke="#555" stroke-width="1.4"/><path d="M1 5 L26 5 M1 13 L26 13 M1 19.5 L26 19.5 M8 5 L8 26 M19 5 L19 26" stroke="#bbb" stroke-width="0.9"/><circle cx="12" cy="11.5" r="6.5" fill="#fff" stroke="#555" stroke-width="1.4"/><rect x="9" y="10" width="1.8" height="4.5" fill="#3d8bd0"/><rect x="11.3" y="7.5" width="1.8" height="7" fill="#3d8bd0"/><rect x="13.6" y="9" width="1.8" height="5.5" fill="#3d8bd0"/><path d="M16.8 16.3 L24.5 24.5" stroke="#555" stroke-width="1.6"/></svg>
<div style="left:1107.00px;top:106.40px;height:23.0px;line-height:23.0px;font-size:11.5px;color:#3c3c3c;white-space:nowrap;transform:scaleX(0.9288);transform-origin:left center;">Analyze</div>
<div style="left:1114.40px;top:121.00px;height:23.0px;line-height:23.0px;font-size:11.5px;color:#3c3c3c;white-space:nowrap;transform:scaleX(0.9303);transform-origin:left center;">Data</div>
<div style="left:1154px;top:78px;width:1px;height:82px;background:#e3e3e3;"></div>
<svg style="left:1171px;top:149px;" width="11" height="7" viewBox="0 0 11 7"><path d="M1 1 L5.5 5.5 L10 1" fill="none" stroke="#444" stroke-width="1.4"/></svg>
<div style="left:13.00px;top:172.80px;height:23.0px;line-height:23.0px;font-size:11.5px;color:#333;white-space:nowrap;transform:scaleX(0.9891);transform-origin:left center;-webkit-text-stroke:0.25px #333;">G20</div>
<svg style="left:89px;top:180px;" width="10" height="7" viewBox="0 0 10 7"><path d="M1 1 L5 5 L9 1" fill="none" stroke="#444" stroke-width="1.4"/></svg>
<div style="left:110.8px;top:177.3px;width:2.4000000000000057px;height:2.3999999999999773px;background:#444;border-radius:50%;"></div>
<div style="left:110.8px;top:182.3px;width:2.4000000000000057px;height:2.3999999999999773px;background:#444;border-radius:50%;"></div>
<div style="left:110.8px;top:187.3px;width:2.4000000000000057px;height:2.3999999999999773px;background:#444;border-radius:50%;"></div>
<svg style="left:129px;top:178px;" width="11" height="11" viewBox="0 0 11 11"><path d="M1 1 L10 10 M10 1 L1 10" stroke="#b4b4b4" stroke-width="1.2"/></svg>
<svg style="left:149px;top:178px;" width="14" height="11" viewBox="0 0 14 11"><path d="M1 5.5 L5 9.5 L13 1" fill="none" stroke="#b4b4b4" stroke-width="1.2"/></svg>
<div style="left:171.50px;top:169.50px;height:29.0px;line-height:29.0px;font-size:14.5px;color:#333;white-space:nowrap;font-weight:bold;font-style:italic;transform:scaleX(1.0858);transform-origin:left center;font-family:'Liberation Serif',serif;">fx</div>
<svg style="left:190.5px;top:181px;" width="9" height="6" viewBox="0 0 9 6"><path d="M1 1 L4.5 4.5 L8 1" fill="none" stroke="#999" stroke-width="1.2"/></svg>
<svg style="left:1175px;top:179px;" width="11" height="7" viewBox="0 0 11 7"><path d="M1 1 L5.5 5.5 L10 1" fill="none" stroke="#444" stroke-width="1.4"/></svg>
<div style="left:339px;top:194.8px;width:63.5px;height:19.0px;background:#ffffff;border:1.3px solid #505050;border-radius:4.5px;box-shadow:0 2px 4px rgba(0,0,0,0.22);"></div>
<div style="left:341.50px;top:193.50px;height:21.0px;line-height:21.0px;font-size:10.5px;color:#555;white-space:nowrap;transform:scaleX(1.0213);transform-origin:left center;">Formula Bar</div>
<div style="left:234.5px;top:203.5px;width:2.0px;height:2.0px;background:#333;border-radius:1px;"></div>
<div style="left:344.5px;top:228px;width:2.0px;height:2px;background:#333;border-radius:1px;"></div>
<div style="left:589px;top:177px;width:2px;height:2px;background:#333;border-radius:1px;"></div>
<div style="left:0px;top:679px;width:1200px;height:21px;background:#f4f4f4;"></div>
<div style="left:11.00px;top:681.00px;height:21.0px;line-height:21.0px;font-size:10.5px;color:#505050;white-space:nowrap;transform:scaleX(0.8731);transform-origin:left center;">Ready</div>
<div style="left:72.50px;top:681.00px;height:21.0px;line-height:21.0px;font-size:10.5px;color:#333;white-space:nowrap;font-weight:bold;transform:scaleX(0.9285);transform-origin:left center;">Accessibility: Investigate</div>
<svg style="left:55px;top:683px;" width="15" height="15" viewBox="0 0 15 15"><circle cx="6.3" cy="3" r="1.5" fill="none" stroke="#333" stroke-width="1.1"/><path d="M1 4.6 Q2 6.3 4.2 6.3 L4.6 9 L2.8 13.5 Q3.5 14.5 4.5 13.8 L6.3 10.8 L7.3 12 M8.4 6.3 Q10.5 6.3 11.6 4.6 Q11 3.5 10 4.2 Q6.3 5.5 2.6 4.2 Q1.6 3.5 1 4.6 M8.4 6.3 L8 9" fill="none" stroke="#333" stroke-width="1.1" stroke-linejoin="round"/><path d="M9.3 10.5 L13.5 14.5 M13.5 10.5 L9.3 14.5" stroke="#333" stroke-width="1.2"/></svg>
<div style="left:926px;top:680px;width:35px;height:20px;background:#e3e4e5;"></div>
<svg style="left:936.5px;top:683.5px;" width="13" height="13" viewBox="0 0 13 13"><rect x="0.7" y="0.7" width="11.6" height="11.6" fill="none" stroke="#444" stroke-width="1.3"/><path d="M4.5 0.7 L4.5 12.3 M8.5 0.7 L8.5 12.3 M0.7 4.5 L12.3 4.5 M0.7 8.5 L12.3 8.5" stroke="#444" stroke-width="1.1"/></svg>
<svg style="left:973.5px;top:683.5px;" width="14" height="13" viewBox="0 0 14 13"><rect x="0.7" y="0.7" width="12.6" height="11.6" rx="1" fill="none" stroke="#555" stroke-width="1.3"/><rect x="3.5" y="2.8" width="7" height="7.5" fill="none" stroke="#555" stroke-width="1.1"/><path d="M5 5 L9 5 M5 7 L9 7" stroke="#777" stroke-width="0.8"/></svg>
<svg style="left:1011px;top:683.5px;" width="14" height="13" viewBox="0 0 14 13"><path d="M0.7 12.3 L0.7 0.7 L13.3 0.7 L13.3 12.3" fill="none" stroke="#444" stroke-width="1.3"/><path d="M4.5 0.7 L4.5 7.5 L9.5 7.5 L9.5 0.7" fill="none" stroke="#444" stroke-width="1.2"/><path d="M0.7 12.3 L13.3 12.3" stroke="#444" stroke-width="1.3"/></svg>
<div style="left:1042.5px;top:689.8px;width:7.5px;height:1.2000000000000455px;background:#666;"></div>
<div style="left:1055px;top:689.6px;width:91px;height:1.6000000000000227px;background:#666;"></div>
<div style="left:1083.5px;top:684px;width:5.5px;height:12.5px;background:#555;border-radius:1px;"></div>
<div style="left:1099.5px;top:687.5px;width:1.2999999999999545px;height:6.0px;background:#666;"></div>
<div style="left:1151px;top:689.8px;width:8px;height:1.2000000000000455px;background:#666;"></div>
<div style="left:1154.4px;top:686.3px;width:1.199999999999818px;height:8.200000000000045px;background:#666;"></div>
<div style="left:1170.00px;top:681.00px;height:21.0px;line-height:21.0px;font-size:10.5px;color:#555;white-space:nowrap;transform:scaleX(0.9517);transform-origin:left center;">70%</div>
</body></html>
